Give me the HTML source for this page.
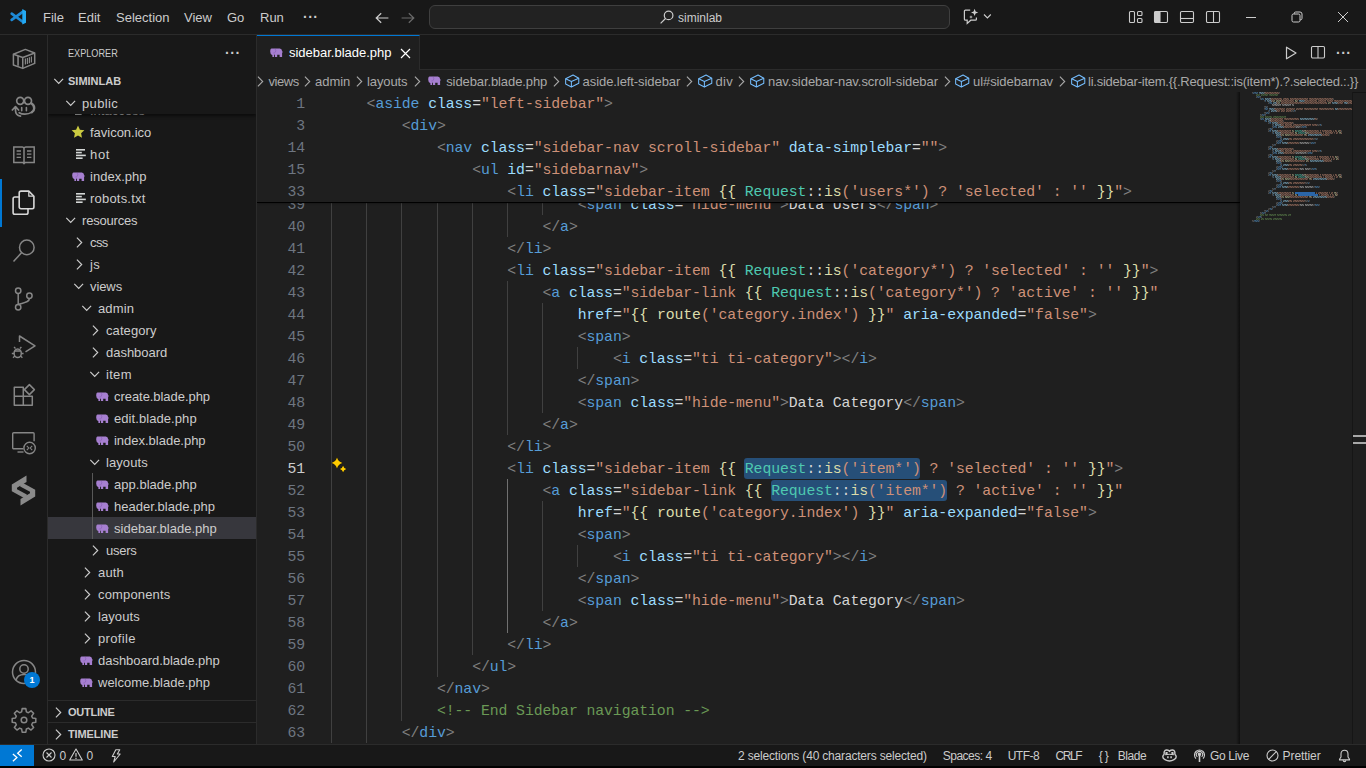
<!DOCTYPE html>
<html>
<head>
<meta charset="utf-8">
<title>sidebar.blade.php - siminlab - Visual Studio Code</title>
<style>
*{box-sizing:border-box;margin:0;padding:0}
html,body{width:1366px;height:768px;overflow:hidden;background:#181818}
body{font-family:"Liberation Sans",sans-serif;font-size:13px;color:#cccccc;position:relative}
.abs{position:absolute}
svg{display:block;position:absolute}
/* ---------- title bar ---------- */
#titlebar{position:absolute;left:0;top:0;width:1366px;height:35px;background:#181818;border-bottom:1px solid #2b2b2b}
.menu{position:absolute;top:0;height:34px;line-height:36px;font-size:13px;color:#cccccc;white-space:nowrap}
#cmd{position:absolute;left:429px;top:5px;width:521px;height:24px;border:1px solid #3f3f3f;border-radius:6px;background:#222222}
/* ---------- activity bar ---------- */
#activity{position:absolute;left:0;top:35px;width:48px;height:709px;background:#181818;border-right:1px solid #2b2b2b}
/* ---------- sidebar ---------- */
#sidebar{position:absolute;left:48px;top:35px;width:209px;height:709px;background:#181818;border-right:1px solid #2b2b2b;overflow:hidden}
.row{position:absolute;left:0;width:208px;height:22px;line-height:22px;font-size:13px;color:#cccccc;white-space:nowrap}
.t{position:absolute;height:22px;line-height:22px;font-size:13px;color:#cccccc;white-space:nowrap;transform:translateY(0.6px)}
/* ---------- editor ---------- */
#editor{position:absolute;left:257px;top:35px;width:1109px;height:709px;background:#1f1f1f;overflow:hidden}
#tabs{position:absolute;left:0;top:0;width:1109px;height:35px;background:#181818;border-bottom:1px solid #2b2b2b}
#tab{position:absolute;left:0;top:0;width:163px;height:35px;background:#1f1f1f;border-top:1px solid #0078d4;border-right:1px solid #2b2b2b}
#crumbs{position:absolute;left:0;top:35px;width:1109px;height:22px;background:#1f1f1f;line-height:24px;font-size:13px;color:#a9a9a9;white-space:nowrap}
#codearea{position:absolute;left:0;top:57px;width:1109px;height:652px;overflow:hidden}
#sticky{position:absolute;left:0;top:0;width:983px;height:110px;background:#1f1f1f;border-bottom:0;box-shadow:0 1px 0 #000,0 2px 2px -1px rgba(0,0,0,.6)}
.code{font-family:"Liberation Mono",monospace;font-size:14.8px;letter-spacing:-0.0843px;white-space:pre;color:#d4d4d4}
.ln{position:absolute;left:0;height:22px;width:1109px;line-height:22px}
.ln .n{position:absolute;left:0;top:1px;width:48px;text-align:right;color:#6e7681}
.ln .na{color:#cccccc}
.ln .c{position:absolute;top:1px}
.gd{position:absolute;top:0;width:1px;height:22px;background:#404040}
.ga{background:#707070}
.selbox{position:absolute;top:1px;height:21px;background:#264f78;border-radius:3px}
#minimap{position:absolute;left:983px;top:0;width:112px;height:652px;background:#1f1f1f}
#minimap:before{content:"";position:absolute;left:-4px;top:0;width:4px;height:652px;background:linear-gradient(to right,rgba(0,0,0,0),rgba(0,0,0,.55))}
/* ---------- status bar ---------- */
#status{position:absolute;left:0;top:744px;width:1366px;height:22px;background:#181818;border-top:1px solid #2b2b2b;font-size:12px;color:#cccccc}
#blackstrip{position:absolute;left:0;top:766px;width:1366px;height:2px;background:#000}
.tx{position:absolute;white-space:pre;color:#cccccc}
.si{position:absolute;top:0;height:22px;line-height:22px;white-space:nowrap}
/* token colours */
.g{color:#808080}.b{color:#569cd6}.a{color:#9cdcfe}.s{color:#ce9178}.y{color:#dcdcaa}.k{color:#4ec9b0}.w{color:#d4d4d4}.cm{color:#6a9955}
</style>
</head>
<body>
<div id="titlebar">
<svg style="left:9px;top:8px" width="18" height="18" viewBox="0 0 18 18"><path d="M14 3.600 2.700 11.900M14 14 2.700 5.700" stroke="#1e8ad6" stroke-width="2.700" stroke-linecap="round" fill="none"/><path d="M13.300 1.100 17 2.900v11.800l-3.700 1.800z" fill="#23a9f2"/></svg>
<span class="menu" style="left:43px">File</span>
<span class="menu" style="left:78px">Edit</span>
<span class="menu" style="left:116px">Selection</span>
<span class="menu" style="left:184px">View</span>
<span class="menu" style="left:227px">Go</span>
<span class="menu" style="left:260px">Run</span>
<span class="menu" style="left:303px;letter-spacing:0.5px;font-size:14px;font-weight:bold;line-height:35px">···</span>
<svg style="left:374px;top:10px" width="16" height="16" viewBox="0 0 16 16" fill="none" stroke="#cccccc" stroke-width="1.2"><path d="M7.2 3.2 2.2 8l5 4.8M2.4 8h12"/></svg>
<svg style="left:400px;top:10px" width="16" height="16" viewBox="0 0 16 16" fill="none" stroke="#6a6a6a" stroke-width="1.2"><path d="M8.8 3.2 13.8 8l-5 4.8M13.6 8h-12"/></svg>
<div id="cmd"></div>
<svg style="left:659px;top:9px" width="16" height="16" viewBox="0 0 16 16" fill="none" stroke="#cccccc" stroke-width="1.2"><circle cx="9.6" cy="6.4" r="4.3"/><path d="M6.5 9.5 1.6 14.4"/></svg>
<span class="menu" style="left:678px;font-size:12px">siminlab</span>
<svg style="left:963px;top:8px" width="17" height="17" viewBox="0 0 17 17" fill="none" stroke="#cccccc" stroke-width="1.2"><path d="M7.2 2.2H2.4a1 1 0 0 0-1 1v8a1 1 0 0 0 1 1h1.8v3.2l3.6-3.2h4.6a1 1 0 0 0 1-1V9.6"/><path d="M11.6 0.8l1 2.6 2.6 1-2.6 1-1 2.6-1-2.6-2.6-1 2.6-1z" fill="#cccccc" stroke="none"/><path d="M8 7.2l.5 1.3 1.3.5-1.3.5L8 10.800l-.5-1.300-1.300-.5 1.300-.5z" fill="#cccccc" stroke="none"/></svg>
<svg style="left:983px;top:13px" width="9" height="7" viewBox="0 0 9 7" fill="none" stroke="#cccccc" stroke-width="1.1"><path d="M1 1.500 4.400 5 7.800 1.500"/></svg>
<!-- layout icons -->
<svg style="left:1128px;top:9px" width="16" height="16" viewBox="0 0 16 16" fill="none" stroke="#cccccc" stroke-width="1.1"><rect x="1.5" y="2.500" width="5" height="11" rx="1"/><rect x="9.500" y="2.500" width="4.500" height="4" rx="1"/><rect x="9.500" y="9.500" width="4.500" height="4" rx="1"/></svg>
<svg style="left:1153px;top:9px" width="16" height="16" viewBox="0 0 16 16" fill="none" stroke="#cccccc" stroke-width="1.1"><rect x="1.500" y="2.500" width="13" height="11" rx="1.200"/><path d="M2 3h5v10H2z" fill="#cccccc"/></svg>
<svg style="left:1179px;top:9px" width="16" height="16" viewBox="0 0 16 16" fill="none" stroke="#cccccc" stroke-width="1.1"><rect x="1.500" y="2.500" width="13" height="11" rx="1.200"/><path d="M1.500 9.500h13"/></svg>
<svg style="left:1205px;top:9px" width="16" height="16" viewBox="0 0 16 16" fill="none" stroke="#cccccc" stroke-width="1.1"><rect x="1.500" y="2.500" width="13" height="11" rx="1.200"/><path d="M8.500 2.500v11"/></svg>
<!-- window controls -->
<div class="abs" style="left:1246px;top:17px;width:10px;height:1px;background:#cccccc"></div>
<svg style="left:1291px;top:11px" width="12" height="12" viewBox="0 0 12 12" fill="none" stroke="#cccccc" stroke-width="1"><rect x="1" y="3" width="8" height="8" rx="1.500"/><path d="M3.200 3V2.500a1.500 1.500 0 0 1 1.500-1.500H9a2 2 0 0 1 2 2v4.300a1.500 1.500 0 0 1-1.500 1.500H9"/></svg>
<svg style="left:1337px;top:11px" width="12" height="12" viewBox="0 0 12 12" fill="none" stroke="#cccccc" stroke-width="1"><path d="M1 1l10 10M11 1 1 11"/></svg>

</div>
<div id="activity">
<div class="abs" style="left:0;top:144px;width:2px;height:48px;background:#0078d4"></div>
<!-- container (y center 59 abs => 24 rel) -->
<svg style="left:12px;top:12px" width="24" height="24" viewBox="0 0 24 24" fill="none" stroke="#868686" stroke-width="1.500" stroke-linejoin="round"><path d="M1.400 7.300 13.350 2.400l9.350 3.600v10.400L10.750 21.400 1.400 18z"/><path d="M1.400 7.300 10.750 10.450l11.950-4.450M10.750 10.450V21.400"/><path d="M6.060 9v9.800" stroke-width="1.600"/><path d="M13.400 11.600v6M15.400 10.900v6M17.400 10.200v6M19.400 9.500v6" stroke-width="1.200"/></svg>
<!-- copilot w/ arrow (center 107 abs => 72 rel) -->
<svg style="left:11px;top:60px" width="26" height="24" viewBox="0 0 26 24" fill="none" stroke="#868686" stroke-width="1.700" stroke-linecap="round" stroke-linejoin="round"><circle cx="9.200" cy="5.800" r="3.500"/><circle cx="17" cy="5.800" r="3.500"/><path d="M12.300 7.600c.5-.5 1.100-.500 1.600 0"/><path d="M10.700 12.500v3.200M15.400 12.500v3.200" stroke-width="1.600"/><path d="M20.300 8.300c1.700 1 2.900 2.800 2.900 4.900 0 1.800-.9 3.100-2.400 4" stroke-width="2.400"/><path d="M21 17.100c-2 1.300-4.500 2-7.200 2-2.100 0-4-.400-5.600-1.400"/><path d="M4.500 11.800v3.500c0 3 2 5.400 5 5.800M1.300 15 4.500 11.600 7.600 15"/></svg>
<!-- book (center 155 abs => 120 rel) -->
<svg style="left:12px;top:108px" width="24" height="24" viewBox="0 0 24 24" fill="none" stroke="#868686" stroke-width="1.500"><path d="M1.800 4h8.400a1.800 1.800 0 0 1 1.800 1.800v13.600H1.800zM22.200 4h-8.400A1.800 1.800 0 0 0 12 5.800v13.600h10.200z"/><path d="M11 19.600l1 1.200 1-1.200" stroke-width="1.200"/><path d="M4.600 8h4.400M4.600 11.200h4.400M4.600 14.300h4.400M15 8h4.400M15 11.200h4.400M15 14.300h4.400" stroke-width="1.300"/></svg>
<!-- files (active) (center 203 abs => 168 rel) -->
<svg style="left:11px;top:155px" width="26" height="26" viewBox="0 0 26 26" fill="none" stroke="#d7d7d7" stroke-width="1.600" stroke-linejoin="round"><path d="M10 1.100h7.800l5.100 5.100V17a1.700 1.700 0 0 1-1.700 1.700H10a1.800 1.800 0 0 1-1.800-1.800V2.900A1.800 1.800 0 0 1 10 1.100z"/><path d="M17.800 1.400v4.800h4.900" stroke-width="1.200"/><path d="M8.200 7H3.900a1.800 1.800 0 0 0-1.800 1.800v13.700a1.800 1.800 0 0 0 1.800 1.800h11.300a1.800 1.800 0 0 0 1.800-1.800v-3.800"/></svg>
<!-- search (center 251 abs => 216 rel) -->
<svg style="left:12px;top:204px" width="24" height="24" viewBox="0 0 24 24" fill="none" stroke="#868686" stroke-width="1.500"><circle cx="14.800" cy="8.400" r="7.300"/><path d="M9.700 13.600 1.500 22.500"/></svg>
<!-- git (center 299 abs => 264 rel) -->
<svg style="left:12px;top:252px" width="24" height="24" viewBox="0 0 24 24" fill="none" stroke="#868686" stroke-width="1.500"><circle cx="6.200" cy="3.800" r="2.700"/><circle cx="6.200" cy="20.200" r="2.700"/><circle cx="17.400" cy="8.800" r="2.700"/><path d="M6.200 6.500v11M17.400 11.500c0 3.500-5 4-11.200 6"/></svg>
<!-- debug (center 347 abs => 312 rel) -->
<svg style="left:10px;top:298px" width="28" height="28" viewBox="0 0 28 28" fill="none" stroke="#868686" stroke-width="1.500" stroke-linejoin="round"><path d="M9.500 9V3l15.500 9.800-9.500 6"/><ellipse cx="7.700" cy="20.200" rx="3.600" ry="4.300"/><path d="M4.600 18h6.200M5.500 15.500l-1.500-1.500M9.900 15.500l1.500-1.500M4.100 20.500H1.800M11.300 20.500h2.300M4.800 23l-1.800 1.800M10.600 23l1.800 1.800" stroke-width="1.300"/></svg>
<!-- extensions (center 395 abs => 360 rel) -->
<svg style="left:12px;top:348px" width="24" height="24" viewBox="0 0 24 24" fill="none" stroke="#868686" stroke-width="1.500" stroke-linejoin="round"><path d="M2.300 4.300h9v9h-9zM2.300 13.300h9v9h-9zM11.300 13.300h9v9h-9z"/><path d="M17.400 1.600l5 5-5 5-5-5z"/></svg>
<!-- remote explorer (center 443 abs => 408 rel) -->
<svg style="left:12px;top:396px" width="26" height="24" viewBox="0 0 26 24" fill="none" stroke="#868686" stroke-width="1.400"><path d="M11.500 17.800H1.700a1 1 0 0 1-1-1V2.800a1 1 0 0 1 1-1h19.400a1 1 0 0 1 1 1v7.500"/><path d="M5.500 21h6" /><circle cx="17.600" cy="17" r="5.700" fill="#181818"/><path d="M14.800 14.800l2 2.200-2 2.200M20.200 14.800l-2 2.200 2 2.200" stroke-width="1.100"/></svg>
<!-- S logo (center 491 abs => 456 rel) -->
<svg style="left:11px;top:440px" width="25" height="31" viewBox="0 0 25 31" fill="#8a8a8a"><path d="M15.500 0.500 0.800 9.500v6.800l15 8.300v-5.200L6 14.200v-1.500l9.500-5.700z"/><path d="M9.500 30.500l14.700-9v-6.800l-15-8.300v5.200l9.800 5.200v1.500l-9.500 5.700z"/></svg>
<!-- account (center 672 abs => 637 rel) -->
<svg style="left:11px;top:624px" width="26" height="26" viewBox="0 0 26 26" fill="none" stroke="#868686" stroke-width="1.500"><circle cx="13" cy="13" r="11.500"/><circle cx="13" cy="10" r="4.200"/><path d="M5 21.200c1-4 4-5.700 8-5.700s7 1.700 8 5.700"/></svg>
<div class="abs" style="left:24px;top:637px;width:16px;height:16px;border-radius:8px;background:#0078d4;color:#fff;font-size:9px;font-weight:bold;line-height:16px;text-align:center">1</div>
<!-- gear (center 720 abs => 685 rel) -->
<svg style="left:11px;top:672px" width="26" height="26" viewBox="0 0 24 24" fill="none" stroke="#868686" stroke-width="1.400" stroke-linejoin="round"><path d="M10.300 1.500h3.400l.5 3 1.800.8 2.500-1.800 2.400 2.400-1.800 2.500.8 1.800 3 .5v3.400l-3 .5-.8 1.800 1.800 2.500-2.400 2.400-2.500-1.800-1.800.8-.5 3h-3.400l-.5-3-1.800-.8-2.500 1.800-2.400-2.400 1.800-2.500-.8-1.800-3-.5v-3.400l3-.5.8-1.800-1.800-2.500 2.400-2.400 2.500 1.800 1.800-.8z"/><circle cx="12" cy="12" r="2.600"/></svg>

</div>
<div id="sidebar">
<div class="abs" style="left:0;top:482px;width:208px;height:22px;background:#37373d"></div>
<span class="t" style="left:42px;top:64px;color:#cccccc">.htaccess</span><svg style="left:27px;top:70px" width="11" height="11" viewBox="0 0 11 11" fill="#d4d7d6"><rect x="0" y="0" width="9" height="1.600"/><rect x="0" y="2.800" width="5.800" height="1.600"/><rect x="0" y="5.600" width="9.800" height="1.600"/><rect x="0" y="8.400" width="6.600" height="1.600"/></svg>
<div class="row" style="top:86px"></div><svg style="left:23px;top:90px" width="14" height="14" viewBox="0 0 14 14"><path d="M7 .600l1.900 4.100 4.500.500-3.300 3.100.900 4.500L7 10.500l-4 2.300.900-4.500L.6 5.200l4.500-.500z" fill="#cbcb41"/></svg><span class="t" style="left:42px;top:86px;letter-spacing:-0.02px">favicon.ico</span>
<div class="row" style="top:108px"></div><svg style="left:28px;top:114px" width="11" height="11" viewBox="0 0 11 11" fill="#d4d7d6"><rect x="0" y="0" width="9" height="1.600"/><rect x="0" y="2.800" width="5.800" height="1.600"/><rect x="0" y="5.600" width="9.800" height="1.600"/><rect x="0" y="8.400" width="6.600" height="1.600"/></svg><span class="t" style="left:42px;top:108px;letter-spacing:0.707px">hot</span>
<div class="row" style="top:130px"></div><svg style="left:24px;top:136.5px" width="13" height="10" viewBox="0 0 13 10"><path d="M1.600 .500h8.200q2.100 0 2.400 2.700l.800 1-.900.400v4.400H9.600V6.800H7.200V9H4.900V6.500q-.800.100-.900.900V9H2.400V7.200Q.2 6.500.2 3.700.2.500 1.600.500z" fill="#a67fd0"/><path d="M5 .800q1.500 1.700.3 3.500-.800.900-2 .7" fill="none" stroke="#8a5fb8" stroke-width=".700"/></svg><span class="t" style="left:42px;top:130px;letter-spacing:0.023px">index.php</span>
<div class="row" style="top:152px"></div><svg style="left:28px;top:158px" width="11" height="11" viewBox="0 0 11 11" fill="#d4d7d6"><rect x="0" y="0" width="9" height="1.600"/><rect x="0" y="2.800" width="5.800" height="1.600"/><rect x="0" y="5.600" width="9.800" height="1.600"/><rect x="0" y="8.400" width="6.600" height="1.600"/></svg><span class="t" style="left:42px;top:152px;letter-spacing:0.203px">robots.txt</span>
<div class="row" style="top:174px"></div><svg style="left:17px;top:182px" width="11" height="7" viewBox="0 0 11 7" fill="none" stroke="#cccccc" stroke-width="1.200"><path d="M1.300 .900 5.700 5.300 10.100 .900"/></svg><span class="t" style="left:34px;top:174px;letter-spacing:-0.186px">resources</span>
<div class="row" style="top:196px"></div><svg style="left:28px;top:202px" width="7" height="11" viewBox="0 0 7 11" fill="none" stroke="#cccccc" stroke-width="1.150"><path d="M.900 .700 5.700 5.500 .900 10.300"/></svg><span class="t" style="left:42px;top:196px;letter-spacing:-0.567px">css</span>
<div class="row" style="top:218px"></div><svg style="left:28px;top:224px" width="7" height="11" viewBox="0 0 7 11" fill="none" stroke="#cccccc" stroke-width="1.150"><path d="M.900 .700 5.700 5.500 .900 10.300"/></svg><span class="t" style="left:42px;top:218px;letter-spacing:0.255px">js</span>
<div class="row" style="top:240px"></div><svg style="left:25px;top:248px" width="11" height="7" viewBox="0 0 11 7" fill="none" stroke="#cccccc" stroke-width="1.200"><path d="M1.300 .900 5.700 5.300 10.100 .900"/></svg><span class="t" style="left:42px;top:240px;letter-spacing:-0.083px">views</span>
<div class="row" style="top:262px"></div><svg style="left:33px;top:270px" width="11" height="7" viewBox="0 0 11 7" fill="none" stroke="#cccccc" stroke-width="1.200"><path d="M1.300 .900 5.700 5.300 10.100 .900"/></svg><span class="t" style="left:50px;top:262px;letter-spacing:0.136px">admin</span>
<div class="row" style="top:284px"></div><svg style="left:44px;top:290px" width="7" height="11" viewBox="0 0 7 11" fill="none" stroke="#cccccc" stroke-width="1.150"><path d="M.900 .700 5.700 5.500 .900 10.300"/></svg><span class="t" style="left:58px;top:284px;letter-spacing:0.078px">category</span>
<div class="row" style="top:306px"></div><svg style="left:44px;top:312px" width="7" height="11" viewBox="0 0 7 11" fill="none" stroke="#cccccc" stroke-width="1.150"><path d="M.900 .700 5.700 5.500 .900 10.300"/></svg><span class="t" style="left:58px;top:306px;letter-spacing:-0.017px">dashboard</span>
<div class="row" style="top:328px"></div><svg style="left:41px;top:336px" width="11" height="7" viewBox="0 0 11 7" fill="none" stroke="#cccccc" stroke-width="1.200"><path d="M1.300 .900 5.700 5.300 10.100 .900"/></svg><span class="t" style="left:58px;top:328px;letter-spacing:0.309px">item</span>
<div class="row" style="top:350px"></div><svg style="left:48px;top:356.5px" width="13" height="10" viewBox="0 0 13 10"><path d="M1.600 .500h8.200q2.100 0 2.400 2.700l.800 1-.900.400v4.400H9.600V6.800H7.200V9H4.900V6.500q-.800.100-.900.900V9H2.400V7.200Q.2 6.500.2 3.700.2.500 1.600.500z" fill="#a67fd0"/><path d="M5 .800q1.500 1.700.3 3.500-.800.900-2 .7" fill="none" stroke="#8a5fb8" stroke-width=".700"/></svg><span class="t" style="left:66px;top:350px;letter-spacing:-0.054px">create.blade.php</span>
<div class="row" style="top:372px"></div><svg style="left:48px;top:378.5px" width="13" height="10" viewBox="0 0 13 10"><path d="M1.600 .500h8.200q2.100 0 2.400 2.700l.800 1-.900.400v4.400H9.600V6.800H7.200V9H4.900V6.500q-.800.100-.900.900V9H2.400V7.200Q.2 6.500.2 3.700.2.500 1.600.500z" fill="#a67fd0"/><path d="M5 .800q1.500 1.700.3 3.500-.800.900-2 .7" fill="none" stroke="#8a5fb8" stroke-width=".700"/></svg><span class="t" style="left:66px;top:372px;letter-spacing:0.072px">edit.blade.php</span>
<div class="row" style="top:394px"></div><svg style="left:48px;top:400.5px" width="13" height="10" viewBox="0 0 13 10"><path d="M1.600 .500h8.200q2.100 0 2.400 2.700l.800 1-.900.400v4.400H9.600V6.800H7.200V9H4.900V6.500q-.800.100-.900.900V9H2.400V7.200Q.2 6.500.2 3.700.2.500 1.600.500z" fill="#a67fd0"/><path d="M5 .800q1.500 1.700.3 3.500-.800.900-2 .7" fill="none" stroke="#8a5fb8" stroke-width=".700"/></svg><span class="t" style="left:66px;top:394px;letter-spacing:-0.014px">index.blade.php</span>
<div class="row" style="top:416px"></div><svg style="left:41px;top:424px" width="11" height="7" viewBox="0 0 11 7" fill="none" stroke="#cccccc" stroke-width="1.200"><path d="M1.300 .900 5.700 5.300 10.100 .900"/></svg><span class="t" style="left:58px;top:416px;letter-spacing:0.085px">layouts</span>
<div class="row" style="top:438px"></div><svg style="left:48px;top:444.5px" width="13" height="10" viewBox="0 0 13 10"><path d="M1.600 .500h8.200q2.100 0 2.400 2.700l.800 1-.900.400v4.400H9.600V6.800H7.200V9H4.900V6.500q-.800.100-.900.900V9H2.400V7.200Q.2 6.500.2 3.700.2.500 1.600.500z" fill="#a67fd0"/><path d="M5 .800q1.500 1.700.3 3.500-.800.900-2 .7" fill="none" stroke="#8a5fb8" stroke-width=".700"/></svg><span class="t" style="left:66px;top:438px;letter-spacing:0.029px">app.blade.php</span>
<div class="row" style="top:460px"></div><svg style="left:48px;top:466.5px" width="13" height="10" viewBox="0 0 13 10"><path d="M1.600 .500h8.200q2.100 0 2.400 2.700l.800 1-.900.400v4.400H9.600V6.800H7.200V9H4.900V6.500q-.800.100-.900.900V9H2.400V7.200Q.2 6.500.2 3.700.2.500 1.600.500z" fill="#a67fd0"/><path d="M5 .800q1.500 1.700.3 3.500-.800.900-2 .7" fill="none" stroke="#8a5fb8" stroke-width=".700"/></svg><span class="t" style="left:66px;top:460px;letter-spacing:0.026px">header.blade.php</span>
<div class="row" style="top:482px"></div><svg style="left:48px;top:488.5px" width="13" height="10" viewBox="0 0 13 10"><path d="M1.600 .500h8.200q2.100 0 2.400 2.700l.800 1-.900.400v4.400H9.600V6.800H7.200V9H4.900V6.500q-.800.100-.900.900V9H2.400V7.200Q.2 6.500.2 3.700.2.500 1.600.500z" fill="#a67fd0"/><path d="M5 .800q1.500 1.700.3 3.500-.800.900-2 .7" fill="none" stroke="#8a5fb8" stroke-width=".700"/></svg><span class="t" style="left:66px;top:482px;letter-spacing:0.008px">sidebar.blade.php</span>
<div class="row" style="top:504px"></div><svg style="left:44px;top:510px" width="7" height="11" viewBox="0 0 7 11" fill="none" stroke="#cccccc" stroke-width="1.150"><path d="M.900 .700 5.700 5.500 .900 10.300"/></svg><span class="t" style="left:58px;top:504px;letter-spacing:-0.259px">users</span>
<div class="row" style="top:526px"></div><svg style="left:36px;top:532px" width="7" height="11" viewBox="0 0 7 11" fill="none" stroke="#cccccc" stroke-width="1.150"><path d="M.900 .700 5.700 5.500 .900 10.300"/></svg><span class="t" style="left:50px;top:526px;letter-spacing:0.172px">auth</span>
<div class="row" style="top:548px"></div><svg style="left:36px;top:554px" width="7" height="11" viewBox="0 0 7 11" fill="none" stroke="#cccccc" stroke-width="1.150"><path d="M.900 .700 5.700 5.500 .900 10.300"/></svg><span class="t" style="left:50px;top:548px;letter-spacing:0.157px">components</span>
<div class="row" style="top:570px"></div><svg style="left:36px;top:576px" width="7" height="11" viewBox="0 0 7 11" fill="none" stroke="#cccccc" stroke-width="1.150"><path d="M.900 .700 5.700 5.500 .900 10.300"/></svg><span class="t" style="left:50px;top:570px;letter-spacing:0.085px">layouts</span>
<div class="row" style="top:592px"></div><svg style="left:36px;top:598px" width="7" height="11" viewBox="0 0 7 11" fill="none" stroke="#cccccc" stroke-width="1.150"><path d="M.900 .700 5.700 5.500 .900 10.300"/></svg><span class="t" style="left:50px;top:592px;letter-spacing:0.34px">profile</span>
<div class="row" style="top:614px"></div><svg style="left:32px;top:620.5px" width="13" height="10" viewBox="0 0 13 10"><path d="M1.600 .500h8.200q2.100 0 2.400 2.700l.800 1-.900.400v4.400H9.600V6.800H7.200V9H4.900V6.500q-.800.100-.900.900V9H2.400V7.200Q.2 6.500.2 3.700.2.500 1.600.500z" fill="#a67fd0"/><path d="M5 .800q1.500 1.700.3 3.500-.800.900-2 .7" fill="none" stroke="#8a5fb8" stroke-width=".700"/></svg><span class="t" style="left:50px;top:614px;letter-spacing:-0.025px">dashboard.blade.php</span>
<div class="row" style="top:636px"></div><svg style="left:32px;top:642.5px" width="13" height="10" viewBox="0 0 13 10"><path d="M1.600 .500h8.200q2.100 0 2.400 2.700l.800 1-.900.400v4.400H9.600V6.800H7.200V9H4.900V6.500q-.800.100-.900.900V9H2.400V7.200Q.2 6.500.2 3.700.2.500 1.600.500z" fill="#a67fd0"/><path d="M5 .800q1.500 1.700.3 3.500-.800.900-2 .7" fill="none" stroke="#8a5fb8" stroke-width=".700"/></svg><span class="t" style="left:50px;top:636px;letter-spacing:-0.002px">welcome.blade.php</span>
<div class="abs" style="left:44px;top:438px;width:1px;height:66px;background:#585858"></div>
<div class="abs" style="left:0;top:0;width:208px;height:79px;background:#181818;box-shadow:0 2px 3px rgba(0,0,0,.55)"></div>
<span class="t" style="left:20px;top:7px;font-size:11px;color:#cccccc;line-height:22px;transform-origin:0 50%;transform:translateY(-0.5px) scaleX(0.83)">EXPLORER</span>
<span class="t" style="left:177px;top:6px;font-size:14px;font-weight:bold;letter-spacing:0.6px;line-height:22px;color:#cccccc">···</span>
<svg style="left:5px;top:43px" width="11" height="7" viewBox="0 0 11 7" fill="none" stroke="#cccccc" stroke-width="1.200"><path d="M1.300 .900 5.700 5.300 10.100 .900"/></svg><span class="t" style="left:20px;top:35px;font-size:11px;font-weight:bold;line-height:22px;transform:translateY(-0.4px)">SIMINLAB</span>
<svg style="left:17px;top:65px" width="11" height="7" viewBox="0 0 11 7" fill="none" stroke="#cccccc" stroke-width="1.200"><path d="M1.300 .900 5.700 5.300 10.100 .900"/></svg><span class="t" style="left:34px;top:57px;letter-spacing:0.339px">public</span>
<div class="abs" style="left:0;top:665px;width:208px;height:1px;background:#2b2b2b"></div>
<svg style="left:7px;top:672px" width="7" height="11" viewBox="0 0 7 11" fill="none" stroke="#cccccc" stroke-width="1.150"><path d="M.900 .700 5.700 5.500 .900 10.300"/></svg><span class="t" style="left:20px;top:666px;font-size:11px;font-weight:bold;line-height:22px;transform:translateY(-0.4px);letter-spacing:-0.25px">OUTLINE</span>
<div class="abs" style="left:0;top:687px;width:208px;height:1px;background:#2b2b2b"></div>
<svg style="left:7px;top:694px" width="7" height="11" viewBox="0 0 7 11" fill="none" stroke="#cccccc" stroke-width="1.150"><path d="M.900 .700 5.700 5.500 .900 10.300"/></svg><span class="t" style="left:20px;top:688px;font-size:11px;font-weight:bold;line-height:22px;transform:translateY(-0.4px);letter-spacing:-0.15px">TIMELINE</span>
</div>
<div id="editor">
  <div id="tabs"><div id="tab"></div>
<svg style="left:13px;top:13px" width="13" height="10" viewBox="0 0 13 10"><path d="M1.600 .500h8.200q2.100 0 2.400 2.700l.800 1-.900.400v4.400H9.600V6.800H7.200V9H4.900V6.500q-.800.100-.900.900V9H2.400V7.200Q.2 6.500.2 3.700.2.500 1.600.500z" fill="#a67fd0"/><path d="M5 .800q1.500 1.700.3 3.500-.800.900-2 .7" fill="none" stroke="#8a5fb8" stroke-width=".700"/></svg>
<span class="tx" style="left:32px;top:0px;height:36px;line-height:36px;font-size:13px;letter-spacing:-0.015px;color:#ffffff">sidebar.blade.php</span>
<svg style="left:143px;top:13px" width="11" height="11" viewBox="0 0 11 11" fill="none" stroke="#ffffff" stroke-width="1.200"><path d="M1 1l9 9M10 1 1 10"/></svg>
<svg style="left:1027px;top:11px" width="14" height="14" viewBox="0 0 14 14" fill="none" stroke="#cccccc" stroke-width="1.200" stroke-linejoin="round"><path d="M2.500 1.200 12 7 2.500 12.800z"/></svg>
<svg style="left:1053px;top:10px" width="16" height="15" viewBox="0 0 16 15" fill="none" stroke="#cccccc" stroke-width="1.100"><rect x="1.500" y="1.500" width="13" height="11.500" rx="1.200"/><path d="M8 1.500v11.500"/></svg>
<span class="tx" style="left:1079px;top:1px;height:35px;line-height:35px;font-size:14px;font-weight:bold;letter-spacing:0.5px">···</span>
  </div>
  <div id="crumbs">
<svg style="left:0px;top:6px" width="7" height="11" viewBox="0 0 7 11" fill="none" stroke="#a9a9a9" stroke-width="1.100"><path d="M.900 .700 5.700 5.500 .900 10.300"/></svg>
<span class="tx" style="left:11.5px;top:1px;height:22px;line-height:22px;font-size:13px;letter-spacing:-0.443px;color:#a9a9a9">views</span>
<svg style="left:47px;top:6px" width="7" height="11" viewBox="0 0 7 11" fill="none" stroke="#a9a9a9" stroke-width="1.100"><path d="M.900 .700 5.700 5.500 .900 10.300"/></svg>
<span class="tx" style="left:58px;top:1px;height:22px;line-height:22px;font-size:13px;letter-spacing:-0.024px;color:#a9a9a9">admin</span>
<svg style="left:99px;top:6px" width="7" height="11" viewBox="0 0 7 11" fill="none" stroke="#a9a9a9" stroke-width="1.100"><path d="M.900 .700 5.700 5.500 .900 10.300"/></svg>
<span class="tx" style="left:110px;top:1px;height:22px;line-height:22px;font-size:13px;letter-spacing:-0.1px;color:#a9a9a9">layouts</span>
<svg style="left:157px;top:6px" width="7" height="11" viewBox="0 0 7 11" fill="none" stroke="#a9a9a9" stroke-width="1.100"><path d="M.900 .700 5.700 5.500 .900 10.300"/></svg>
<svg style="left:171px;top:6px" width="13" height="10" viewBox="0 0 13 10"><path d="M1.600 .500h8.200q2.100 0 2.400 2.700l.800 1-.900.400v4.400H9.600V6.800H7.200V9H4.900V6.500q-.800.100-.900.900V9H2.400V7.200Q.2 6.500.2 3.700.2.500 1.600.500z" fill="#a67fd0"/><path d="M5 .800q1.500 1.700.3 3.500-.800.900-2 .7" fill="none" stroke="#8a5fb8" stroke-width=".700"/></svg>
<span class="tx" style="left:189.2px;top:1px;height:22px;line-height:22px;font-size:13px;letter-spacing:-0.097px;color:#a9a9a9">sidebar.blade.php</span>
<svg style="left:296px;top:6px" width="7" height="11" viewBox="0 0 7 11" fill="none" stroke="#a9a9a9" stroke-width="1.100"><path d="M.900 .700 5.700 5.500 .900 10.300"/></svg>
<svg style="left:307.5px;top:4px" width="15" height="14" viewBox="0 0 16 14" preserveAspectRatio="none" fill="none" stroke="#75beff" stroke-width="1.100" stroke-linejoin="round"><path d="M8.600 1.050 14.700 4.300V9.200L6.800 13.100.7 10.050V4.800z"/><path d="M.7 4.800 6.800 7.600 14.700 4.300M6.800 7.600V13.100"/></svg>
<span class="tx" style="left:325.6px;top:1px;height:22px;line-height:22px;font-size:13px;letter-spacing:-0.078px;color:#a9a9a9">aside.left-sidebar</span>
<svg style="left:429px;top:6px" width="7" height="11" viewBox="0 0 7 11" fill="none" stroke="#a9a9a9" stroke-width="1.100"><path d="M.900 .700 5.700 5.500 .900 10.300"/></svg>
<svg style="left:440.5px;top:4px" width="15" height="14" viewBox="0 0 16 14" preserveAspectRatio="none" fill="none" stroke="#75beff" stroke-width="1.100" stroke-linejoin="round"><path d="M8.600 1.050 14.700 4.300V9.200L6.800 13.100.7 10.050V4.800z"/><path d="M.7 4.800 6.800 7.600 14.700 4.300M6.800 7.600V13.100"/></svg>
<span class="tx" style="left:458.5px;top:1px;height:22px;line-height:22px;font-size:13px;letter-spacing:0.292px;color:#a9a9a9">div</span>
<svg style="left:480.5px;top:6px" width="7" height="11" viewBox="0 0 7 11" fill="none" stroke="#a9a9a9" stroke-width="1.100"><path d="M.900 .700 5.700 5.500 .900 10.300"/></svg>
<svg style="left:492.5px;top:4px" width="15" height="14" viewBox="0 0 16 14" preserveAspectRatio="none" fill="none" stroke="#75beff" stroke-width="1.100" stroke-linejoin="round"><path d="M8.600 1.050 14.700 4.300V9.200L6.800 13.100.7 10.050V4.800z"/><path d="M.7 4.800 6.800 7.600 14.700 4.300M6.800 7.600V13.100"/></svg>
<span class="tx" style="left:511px;top:1px;height:22px;line-height:22px;font-size:13px;letter-spacing:-0.049px;color:#a9a9a9">nav.sidebar-nav.scroll-sidebar</span>
<svg style="left:686.5px;top:6px" width="7" height="11" viewBox="0 0 7 11" fill="none" stroke="#a9a9a9" stroke-width="1.100"><path d="M.900 .700 5.700 5.500 .900 10.300"/></svg>
<svg style="left:697.5px;top:4px" width="15" height="14" viewBox="0 0 16 14" preserveAspectRatio="none" fill="none" stroke="#75beff" stroke-width="1.100" stroke-linejoin="round"><path d="M8.600 1.050 14.700 4.300V9.200L6.800 13.100.7 10.050V4.800z"/><path d="M.7 4.800 6.800 7.600 14.700 4.300M6.800 7.600V13.100"/></svg>
<span class="tx" style="left:716px;top:1px;height:22px;line-height:22px;font-size:13px;letter-spacing:-0.073px;color:#a9a9a9">ul#sidebarnav</span>
<svg style="left:801.5px;top:6px" width="7" height="11" viewBox="0 0 7 11" fill="none" stroke="#a9a9a9" stroke-width="1.100"><path d="M.900 .700 5.700 5.500 .900 10.300"/></svg>
<svg style="left:813.5px;top:4px" width="15" height="14" viewBox="0 0 16 14" preserveAspectRatio="none" fill="none" stroke="#75beff" stroke-width="1.100" stroke-linejoin="round"><path d="M8.600 1.050 14.700 4.300V9.200L6.800 13.100.7 10.050V4.800z"/><path d="M.7 4.800 6.800 7.600 14.700 4.300M6.800 7.600V13.100"/></svg>
<span class="tx" style="left:831px;top:1px;height:22px;line-height:22px;font-size:13px;letter-spacing:-0.236px;color:#a9a9a9">li.sidebar-item.{{.Request::is(item*).?.selected.:.}}</span>
  </div>
  <div id="codearea">
<div class="ln code" style="top:101px"><i class="gd" style="left:74px"></i><i class="gd" style="left:109px"></i><i class="gd" style="left:144px"></i><i class="gd" style="left:180px"></i><i class="gd" style="left:215px"></i><i class="gd" style="left:250px"></i><i class="gd" style="left:285px"></i><span class="n">39</span><span class="c" style="left:320.72px"><span class="g">&lt;</span><span class="b">span</span> <span class="a">class</span><span class="w">=</span><span class="s">"hide-menu"</span><span class="g">&gt;</span><span class="w">Data Users</span><span class="g">&lt;/</span><span class="b">span</span><span class="g">&gt;</span></span></div>
<div class="ln code" style="top:123px"><i class="gd" style="left:74px"></i><i class="gd" style="left:109px"></i><i class="gd" style="left:144px"></i><i class="gd" style="left:180px"></i><i class="gd" style="left:215px"></i><i class="gd" style="left:250px"></i><span class="n">40</span><span class="c" style="left:285.53px"><span class="g">&lt;/</span><span class="b">a</span><span class="g">&gt;</span></span></div>
<div class="ln code" style="top:145px"><i class="gd" style="left:74px"></i><i class="gd" style="left:109px"></i><i class="gd" style="left:144px"></i><i class="gd" style="left:180px"></i><i class="gd" style="left:215px"></i><span class="n">41</span><span class="c" style="left:250.34px"><span class="g">&lt;/</span><span class="b">li</span><span class="g">&gt;</span></span></div>
<div class="ln code" style="top:167px"><i class="gd" style="left:74px"></i><i class="gd" style="left:109px"></i><i class="gd" style="left:144px"></i><i class="gd" style="left:180px"></i><i class="gd" style="left:215px"></i><span class="n">42</span><span class="c" style="left:250.34px"><span class="g">&lt;</span><span class="b">li</span> <span class="a">class</span><span class="w">=</span><span class="s">"sidebar-item </span><span class="y">{{</span><span class="s"> </span><span class="k">Request</span><span class="w">::</span><span class="y">is</span><span class="s">(</span><span class="s">'category*'</span><span class="s">)</span><span class="s"> ? </span><span class="s">'selected'</span><span class="s"> : </span><span class="s">''</span><span class="s"> </span><span class="y">}}</span><span class="s">"</span><span class="g">&gt;</span></span></div>
<div class="ln code" style="top:189px"><i class="gd" style="left:74px"></i><i class="gd" style="left:109px"></i><i class="gd" style="left:144px"></i><i class="gd" style="left:180px"></i><i class="gd" style="left:215px"></i><i class="gd" style="left:250px"></i><span class="n">43</span><span class="c" style="left:285.53px"><span class="g">&lt;</span><span class="b">a</span> <span class="a">class</span><span class="w">=</span><span class="s">"sidebar-link </span><span class="y">{{</span><span class="s"> </span><span class="k">Request</span><span class="w">::</span><span class="y">is</span><span class="s">(</span><span class="s">'category*'</span><span class="s">)</span><span class="s"> ? </span><span class="s">'active'</span><span class="s"> : </span><span class="s">''</span><span class="s"> </span><span class="y">}}</span><span class="s">"</span></span></div>
<div class="ln code" style="top:211px"><i class="gd" style="left:74px"></i><i class="gd" style="left:109px"></i><i class="gd" style="left:144px"></i><i class="gd" style="left:180px"></i><i class="gd" style="left:215px"></i><i class="gd" style="left:250px"></i><i class="gd" style="left:285px"></i><span class="n">44</span><span class="c" style="left:320.72px"><span class="a">href</span><span class="w">=</span><span class="s">"</span><span class="y">{{</span><span class="s"> </span><span class="y">route</span><span class="s">(</span><span class="s">'category.index'</span><span class="s">)</span><span class="s"> </span><span class="y">}}</span><span class="s">"</span> <span class="a">aria-expanded</span><span class="w">=</span><span class="s">"false"</span><span class="g">&gt;</span></span></div>
<div class="ln code" style="top:233px"><i class="gd" style="left:74px"></i><i class="gd" style="left:109px"></i><i class="gd" style="left:144px"></i><i class="gd" style="left:180px"></i><i class="gd" style="left:215px"></i><i class="gd" style="left:250px"></i><i class="gd" style="left:285px"></i><span class="n">45</span><span class="c" style="left:320.72px"><span class="g">&lt;</span><span class="b">span</span><span class="g">&gt;</span></span></div>
<div class="ln code" style="top:255px"><i class="gd" style="left:74px"></i><i class="gd" style="left:109px"></i><i class="gd" style="left:144px"></i><i class="gd" style="left:180px"></i><i class="gd" style="left:215px"></i><i class="gd" style="left:250px"></i><i class="gd" style="left:285px"></i><i class="gd" style="left:320px"></i><span class="n">46</span><span class="c" style="left:355.90px"><span class="g">&lt;</span><span class="b">i</span> <span class="a">class</span><span class="w">=</span><span class="s">"ti ti-category"</span><span class="g">&gt;</span><span class="g">&lt;/</span><span class="b">i</span><span class="g">&gt;</span></span></div>
<div class="ln code" style="top:277px"><i class="gd" style="left:74px"></i><i class="gd" style="left:109px"></i><i class="gd" style="left:144px"></i><i class="gd" style="left:180px"></i><i class="gd" style="left:215px"></i><i class="gd" style="left:250px"></i><i class="gd" style="left:285px"></i><span class="n">47</span><span class="c" style="left:320.72px"><span class="g">&lt;/</span><span class="b">span</span><span class="g">&gt;</span></span></div>
<div class="ln code" style="top:299px"><i class="gd" style="left:74px"></i><i class="gd" style="left:109px"></i><i class="gd" style="left:144px"></i><i class="gd" style="left:180px"></i><i class="gd" style="left:215px"></i><i class="gd" style="left:250px"></i><i class="gd" style="left:285px"></i><span class="n">48</span><span class="c" style="left:320.72px"><span class="g">&lt;</span><span class="b">span</span> <span class="a">class</span><span class="w">=</span><span class="s">"hide-menu"</span><span class="g">&gt;</span><span class="w">Data Category</span><span class="g">&lt;/</span><span class="b">span</span><span class="g">&gt;</span></span></div>
<div class="ln code" style="top:321px"><i class="gd" style="left:74px"></i><i class="gd" style="left:109px"></i><i class="gd" style="left:144px"></i><i class="gd" style="left:180px"></i><i class="gd" style="left:215px"></i><i class="gd" style="left:250px"></i><span class="n">49</span><span class="c" style="left:285.53px"><span class="g">&lt;/</span><span class="b">a</span><span class="g">&gt;</span></span></div>
<div class="ln code" style="top:343px"><i class="gd" style="left:74px"></i><i class="gd" style="left:109px"></i><i class="gd" style="left:144px"></i><i class="gd" style="left:180px"></i><i class="gd" style="left:215px"></i><span class="n">50</span><span class="c" style="left:250.34px"><span class="g">&lt;/</span><span class="b">li</span><span class="g">&gt;</span></span></div>
<div class="ln code" style="top:365px"><i class="gd" style="left:74px"></i><i class="gd" style="left:109px"></i><i class="gd" style="left:144px"></i><i class="gd" style="left:180px"></i><i class="gd" style="left:215px"></i><i class="selbox" style="left:487px;width:176px"></i><span class="n na">51</span><span class="c" style="left:250.34px"><span class="g">&lt;</span><span class="b">li</span> <span class="a">class</span><span class="w">=</span><span class="s">"sidebar-item </span><span class="y">{{</span><span class="s"> </span><span class="k">Request</span><span class="w">::</span><span class="y">is</span><span class="s">(</span><span class="s">'item*'</span><span class="s">)</span><span class="s"> ? </span><span class="s">'selected'</span><span class="s"> : </span><span class="s">''</span><span class="s"> </span><span class="y">}}</span><span class="s">"</span><span class="g">&gt;</span></span></div>
<div class="ln code" style="top:387px"><i class="gd" style="left:74px"></i><i class="gd" style="left:109px"></i><i class="gd" style="left:144px"></i><i class="gd" style="left:180px"></i><i class="gd" style="left:215px"></i><i class="gd ga" style="left:250px"></i><i class="selbox" style="left:514px;width:176px"></i><span class="n">52</span><span class="c" style="left:285.53px"><span class="g">&lt;</span><span class="b">a</span> <span class="a">class</span><span class="w">=</span><span class="s">"sidebar-link </span><span class="y">{{</span><span class="s"> </span><span class="k">Request</span><span class="w">::</span><span class="y">is</span><span class="s">(</span><span class="s">'item*'</span><span class="s">)</span><span class="s"> ? </span><span class="s">'active'</span><span class="s"> : </span><span class="s">''</span><span class="s"> </span><span class="y">}}</span><span class="s">"</span></span></div>
<div class="ln code" style="top:409px"><i class="gd" style="left:74px"></i><i class="gd" style="left:109px"></i><i class="gd" style="left:144px"></i><i class="gd" style="left:180px"></i><i class="gd" style="left:215px"></i><i class="gd ga" style="left:250px"></i><i class="gd" style="left:285px"></i><span class="n">53</span><span class="c" style="left:320.72px"><span class="a">href</span><span class="w">=</span><span class="s">"</span><span class="y">{{</span><span class="s"> </span><span class="y">route</span><span class="s">(</span><span class="s">'category.index'</span><span class="s">)</span><span class="s"> </span><span class="y">}}</span><span class="s">"</span> <span class="a">aria-expanded</span><span class="w">=</span><span class="s">"false"</span><span class="g">&gt;</span></span></div>
<div class="ln code" style="top:431px"><i class="gd" style="left:74px"></i><i class="gd" style="left:109px"></i><i class="gd" style="left:144px"></i><i class="gd" style="left:180px"></i><i class="gd" style="left:215px"></i><i class="gd ga" style="left:250px"></i><i class="gd" style="left:285px"></i><span class="n">54</span><span class="c" style="left:320.72px"><span class="g">&lt;</span><span class="b">span</span><span class="g">&gt;</span></span></div>
<div class="ln code" style="top:453px"><i class="gd" style="left:74px"></i><i class="gd" style="left:109px"></i><i class="gd" style="left:144px"></i><i class="gd" style="left:180px"></i><i class="gd" style="left:215px"></i><i class="gd ga" style="left:250px"></i><i class="gd" style="left:285px"></i><i class="gd" style="left:320px"></i><span class="n">55</span><span class="c" style="left:355.90px"><span class="g">&lt;</span><span class="b">i</span> <span class="a">class</span><span class="w">=</span><span class="s">"ti ti-category"</span><span class="g">&gt;</span><span class="g">&lt;/</span><span class="b">i</span><span class="g">&gt;</span></span></div>
<div class="ln code" style="top:475px"><i class="gd" style="left:74px"></i><i class="gd" style="left:109px"></i><i class="gd" style="left:144px"></i><i class="gd" style="left:180px"></i><i class="gd" style="left:215px"></i><i class="gd ga" style="left:250px"></i><i class="gd" style="left:285px"></i><span class="n">56</span><span class="c" style="left:320.72px"><span class="g">&lt;/</span><span class="b">span</span><span class="g">&gt;</span></span></div>
<div class="ln code" style="top:497px"><i class="gd" style="left:74px"></i><i class="gd" style="left:109px"></i><i class="gd" style="left:144px"></i><i class="gd" style="left:180px"></i><i class="gd" style="left:215px"></i><i class="gd ga" style="left:250px"></i><i class="gd" style="left:285px"></i><span class="n">57</span><span class="c" style="left:320.72px"><span class="g">&lt;</span><span class="b">span</span> <span class="a">class</span><span class="w">=</span><span class="s">"hide-menu"</span><span class="g">&gt;</span><span class="w">Data Category</span><span class="g">&lt;/</span><span class="b">span</span><span class="g">&gt;</span></span></div>
<div class="ln code" style="top:519px"><i class="gd" style="left:74px"></i><i class="gd" style="left:109px"></i><i class="gd" style="left:144px"></i><i class="gd" style="left:180px"></i><i class="gd" style="left:215px"></i><i class="gd ga" style="left:250px"></i><span class="n">58</span><span class="c" style="left:285.53px"><span class="g">&lt;/</span><span class="b">a</span><span class="g">&gt;</span></span></div>
<div class="ln code" style="top:541px"><i class="gd" style="left:74px"></i><i class="gd" style="left:109px"></i><i class="gd" style="left:144px"></i><i class="gd" style="left:180px"></i><i class="gd" style="left:215px"></i><span class="n">59</span><span class="c" style="left:250.34px"><span class="g">&lt;/</span><span class="b">li</span><span class="g">&gt;</span></span></div>
<div class="ln code" style="top:563px"><i class="gd" style="left:74px"></i><i class="gd" style="left:109px"></i><i class="gd" style="left:144px"></i><i class="gd" style="left:180px"></i><span class="n">60</span><span class="c" style="left:215.15px"><span class="g">&lt;/</span><span class="b">ul</span><span class="g">&gt;</span></span></div>
<div class="ln code" style="top:585px"><i class="gd" style="left:74px"></i><i class="gd" style="left:109px"></i><i class="gd" style="left:144px"></i><span class="n">61</span><span class="c" style="left:179.96px"><span class="g">&lt;/</span><span class="b">nav</span><span class="g">&gt;</span></span></div>
<div class="ln code" style="top:607px"><i class="gd" style="left:74px"></i><i class="gd" style="left:109px"></i><i class="gd" style="left:144px"></i><span class="n">62</span><span class="c" style="left:179.96px"><span class="cm">&lt;!-- End Sidebar navigation --&gt;</span></span></div>
<div class="ln code" style="top:629px"><i class="gd" style="left:74px"></i><i class="gd" style="left:109px"></i><span class="n">63</span><span class="c" style="left:144.78px"><span class="g">&lt;/</span><span class="b">div</span><span class="g">&gt;</span></span></div>
<div id="sticky">
<div class="ln code" style="top:0px"><span class="n">1</span><span class="c" style="left:109.59px"><span class="g">&lt;</span><span class="b">aside</span> <span class="a">class</span><span class="w">=</span><span class="s">"left-sidebar"</span><span class="g">&gt;</span></span></div>
<div class="ln code" style="top:22px"><span class="n">3</span><span class="c" style="left:144.78px"><span class="g">&lt;</span><span class="b">div</span><span class="g">&gt;</span></span></div>
<div class="ln code" style="top:44px"><span class="n">14</span><span class="c" style="left:179.96px"><span class="g">&lt;</span><span class="b">nav</span> <span class="a">class</span><span class="w">=</span><span class="s">"sidebar-nav scroll-sidebar"</span> <span class="a">data-simplebar</span><span class="w">=</span><span class="s">""</span><span class="g">&gt;</span></span></div>
<div class="ln code" style="top:66px"><span class="n">15</span><span class="c" style="left:215.15px"><span class="g">&lt;</span><span class="b">ul</span> <span class="a">id</span><span class="w">=</span><span class="s">"sidebarnav"</span><span class="g">&gt;</span></span></div>
<div class="ln code" style="top:88px"><span class="n">33</span><span class="c" style="left:250.34px"><span class="g">&lt;</span><span class="b">li</span> <span class="a">class</span><span class="w">=</span><span class="s">"sidebar-item </span><span class="y">{{</span><span class="s"> </span><span class="k">Request</span><span class="w">::</span><span class="y">is</span><span class="s">(</span><span class="s">'users*'</span><span class="s">)</span><span class="s"> ? </span><span class="s">'selected'</span><span class="s"> : </span><span class="s">''</span><span class="s"> </span><span class="y">}}</span><span class="s">"</span><span class="g">&gt;</span></span></div>
</div>
<div id="minimap"><svg style="left:0;top:0" width="112" height="140" viewBox="0 0 112 140" shape-rendering="crispEdges"><defs><pattern id="dp" width="5" height="2" patternUnits="userSpaceOnUse"><rect x="0" y="0" width="1" height="1" fill="rgb(255,255,255)"/><rect x="1" y="0" width="1" height="1" fill="rgb(140,140,140)"/><rect x="2" y="0" width="1" height="1" fill="rgb(229,229,229)"/><rect x="3" y="0" width="1" height="1" fill="rgb(127,127,127)"/><rect x="4" y="0" width="1" height="1" fill="rgb(204,204,204)"/><rect x="0" y="1" width="1" height="1" fill="rgb(153,153,153)"/><rect x="1" y="1" width="1" height="1" fill="rgb(242,242,242)"/><rect x="2" y="1" width="1" height="1" fill="rgb(127,127,127)"/><rect x="3" y="1" width="1" height="1" fill="rgb(216,216,216)"/><rect x="4" y="1" width="1" height="1" fill="rgb(114,114,114)"/></pattern><mask id="dm"><rect x="0" y="0" width="112" height="140" fill="url(#dp)"/></mask></defs><g opacity="0.52" mask="url(#dm)"><rect x="12" y="0" width="1" height="2" fill="#808080"/><rect x="13" y="0" width="5" height="2" fill="#569cd6"/><rect x="19" y="0" width="5" height="2" fill="#9cdcfe"/><rect x="24" y="0" width="1" height="2" fill="#d4d4d4"/><rect x="25" y="0" width="14" height="2" fill="#ce9178"/><rect x="39" y="0" width="1" height="2" fill="#808080"/><rect x="16" y="2" width="4" height="2" fill="#6a9955"/><rect x="21" y="2" width="7" height="2" fill="#6a9955"/><rect x="29" y="2" width="9" height="2" fill="#6a9955"/><rect x="16" y="4" width="1" height="2" fill="#808080"/><rect x="17" y="4" width="3" height="2" fill="#569cd6"/><rect x="20" y="4" width="1" height="2" fill="#808080"/><rect x="20" y="6" width="1" height="2" fill="#808080"/><rect x="21" y="6" width="3" height="2" fill="#569cd6"/><rect x="25" y="6" width="5" height="2" fill="#9cdcfe"/><rect x="30" y="6" width="1" height="2" fill="#d4d4d4"/><rect x="31" y="6" width="11" height="2" fill="#ce9178"/><rect x="43" y="6" width="6" height="2" fill="#ce9178"/><rect x="50" y="6" width="18" height="2" fill="#ce9178"/><rect x="69" y="6" width="24" height="2" fill="#ce9178"/><rect x="93" y="6" width="1" height="2" fill="#808080"/><rect x="24" y="8" width="1" height="2" fill="#808080"/><rect x="25" y="8" width="1" height="2" fill="#569cd6"/><rect x="27" y="8" width="4" height="2" fill="#9cdcfe"/><rect x="31" y="8" width="1" height="2" fill="#d4d4d4"/><rect x="32" y="8" width="1" height="2" fill="#ce9178"/><rect x="33" y="8" width="2" height="2" fill="#dcdcaa"/><rect x="36" y="8" width="5" height="2" fill="#dcdcaa"/><rect x="41" y="8" width="1" height="2" fill="#ce9178"/><rect x="42" y="8" width="11" height="2" fill="#ce9178"/><rect x="53" y="8" width="1" height="2" fill="#ce9178"/><rect x="55" y="8" width="2" height="2" fill="#dcdcaa"/><rect x="57" y="8" width="1" height="2" fill="#ce9178"/><rect x="59" y="8" width="5" height="2" fill="#9cdcfe"/><rect x="64" y="8" width="1" height="2" fill="#d4d4d4"/><rect x="65" y="8" width="12" height="2" fill="#ce9178"/><rect x="78" y="8" width="8" height="2" fill="#ce9178"/><rect x="87" y="8" width="6" height="2" fill="#ce9178"/><rect x="94" y="8" width="18" height="2" fill="#ce9178"/><rect x="28" y="10" width="1" height="2" fill="#808080"/><rect x="29" y="10" width="3" height="2" fill="#569cd6"/><rect x="33" y="10" width="3" height="2" fill="#9cdcfe"/><rect x="36" y="10" width="1" height="2" fill="#d4d4d4"/><rect x="37" y="10" width="1" height="2" fill="#ce9178"/><rect x="38" y="10" width="2" height="2" fill="#dcdcaa"/><rect x="41" y="10" width="46" height="2" fill="#ce9178"/><rect x="88" y="10" width="2" height="2" fill="#dcdcaa"/><rect x="90" y="10" width="1" height="2" fill="#ce9178"/><rect x="92" y="10" width="5" height="2" fill="#9cdcfe"/><rect x="97" y="10" width="1" height="2" fill="#d4d4d4"/><rect x="98" y="10" width="5" height="2" fill="#ce9178"/><rect x="104" y="10" width="3" height="2" fill="#9cdcfe"/><rect x="107" y="10" width="1" height="2" fill="#d4d4d4"/><rect x="108" y="10" width="4" height="2" fill="#ce9178"/><rect x="32" y="12" width="9" height="2" fill="#d4d4d4"/><rect x="42" y="12" width="9" height="2" fill="#d4d4d4"/><rect x="52" y="12" width="2" height="2" fill="#d4d4d4"/><rect x="24" y="14" width="2" height="2" fill="#808080"/><rect x="26" y="14" width="1" height="2" fill="#569cd6"/><rect x="27" y="14" width="1" height="2" fill="#808080"/><rect x="24" y="16" width="1" height="2" fill="#808080"/><rect x="25" y="16" width="3" height="2" fill="#569cd6"/><rect x="29" y="16" width="5" height="2" fill="#9cdcfe"/><rect x="34" y="16" width="1" height="2" fill="#d4d4d4"/><rect x="35" y="16" width="10" height="2" fill="#ce9178"/><rect x="46" y="16" width="9" height="2" fill="#ce9178"/><rect x="56" y="16" width="7" height="2" fill="#ce9178"/><rect x="64" y="16" width="14" height="2" fill="#ce9178"/><rect x="79" y="16" width="15" height="2" fill="#ce9178"/><rect x="95" y="16" width="2" height="2" fill="#9cdcfe"/><rect x="97" y="16" width="1" height="2" fill="#d4d4d4"/><rect x="98" y="16" width="14" height="2" fill="#ce9178"/><rect x="28" y="18" width="1" height="2" fill="#808080"/><rect x="29" y="18" width="1" height="2" fill="#569cd6"/><rect x="31" y="18" width="5" height="2" fill="#9cdcfe"/><rect x="36" y="18" width="1" height="2" fill="#d4d4d4"/><rect x="37" y="18" width="3" height="2" fill="#ce9178"/><rect x="41" y="18" width="4" height="2" fill="#ce9178"/><rect x="46" y="18" width="5" height="2" fill="#ce9178"/><rect x="51" y="18" width="1" height="2" fill="#808080"/><rect x="52" y="18" width="2" height="2" fill="#808080"/><rect x="54" y="18" width="1" height="2" fill="#569cd6"/><rect x="55" y="18" width="1" height="2" fill="#808080"/><rect x="24" y="20" width="2" height="2" fill="#808080"/><rect x="26" y="20" width="3" height="2" fill="#569cd6"/><rect x="29" y="20" width="1" height="2" fill="#808080"/><rect x="20" y="22" width="2" height="2" fill="#808080"/><rect x="22" y="22" width="3" height="2" fill="#569cd6"/><rect x="25" y="22" width="1" height="2" fill="#808080"/><rect x="20" y="24" width="4" height="2" fill="#6a9955"/><rect x="25" y="24" width="7" height="2" fill="#6a9955"/><rect x="33" y="24" width="13" height="2" fill="#6a9955"/><rect x="20" y="26" width="1" height="2" fill="#808080"/><rect x="21" y="26" width="3" height="2" fill="#569cd6"/><rect x="25" y="26" width="5" height="2" fill="#9cdcfe"/><rect x="30" y="26" width="1" height="2" fill="#d4d4d4"/><rect x="31" y="26" width="12" height="2" fill="#ce9178"/><rect x="44" y="26" width="15" height="2" fill="#ce9178"/><rect x="60" y="26" width="14" height="2" fill="#9cdcfe"/><rect x="74" y="26" width="1" height="2" fill="#d4d4d4"/><rect x="75" y="26" width="2" height="2" fill="#ce9178"/><rect x="77" y="26" width="1" height="2" fill="#808080"/><rect x="24" y="28" width="1" height="2" fill="#808080"/><rect x="25" y="28" width="2" height="2" fill="#569cd6"/><rect x="28" y="28" width="2" height="2" fill="#9cdcfe"/><rect x="30" y="28" width="1" height="2" fill="#d4d4d4"/><rect x="31" y="28" width="12" height="2" fill="#ce9178"/><rect x="43" y="28" width="1" height="2" fill="#808080"/><rect x="28" y="30" width="1" height="2" fill="#808080"/><rect x="29" y="30" width="2" height="2" fill="#569cd6"/><rect x="32" y="30" width="5" height="2" fill="#9cdcfe"/><rect x="37" y="30" width="1" height="2" fill="#d4d4d4"/><rect x="38" y="30" width="15" height="2" fill="#ce9178"/><rect x="53" y="30" width="1" height="2" fill="#808080"/><rect x="32" y="32" width="1" height="2" fill="#808080"/><rect x="33" y="32" width="1" height="2" fill="#569cd6"/><rect x="35" y="32" width="5" height="2" fill="#9cdcfe"/><rect x="40" y="32" width="1" height="2" fill="#d4d4d4"/><rect x="41" y="32" width="3" height="2" fill="#ce9178"/><rect x="45" y="32" width="7" height="2" fill="#ce9178"/><rect x="53" y="32" width="18" height="2" fill="#ce9178"/><rect x="72" y="32" width="5" height="2" fill="#ce9178"/><rect x="77" y="32" width="1" height="2" fill="#808080"/><rect x="78" y="32" width="2" height="2" fill="#808080"/><rect x="80" y="32" width="1" height="2" fill="#569cd6"/><rect x="81" y="32" width="1" height="2" fill="#808080"/><rect x="32" y="34" width="1" height="2" fill="#808080"/><rect x="33" y="34" width="4" height="2" fill="#569cd6"/><rect x="38" y="34" width="5" height="2" fill="#9cdcfe"/><rect x="43" y="34" width="1" height="2" fill="#d4d4d4"/><rect x="44" y="34" width="11" height="2" fill="#ce9178"/><rect x="55" y="34" width="1" height="2" fill="#808080"/><rect x="56" y="34" width="4" height="2" fill="#d4d4d4"/><rect x="60" y="34" width="2" height="2" fill="#808080"/><rect x="62" y="34" width="4" height="2" fill="#569cd6"/><rect x="66" y="34" width="1" height="2" fill="#808080"/><rect x="28" y="36" width="2" height="2" fill="#808080"/><rect x="30" y="36" width="2" height="2" fill="#569cd6"/><rect x="32" y="36" width="1" height="2" fill="#808080"/><rect x="28" y="38" width="1" height="2" fill="#808080"/><rect x="29" y="38" width="2" height="2" fill="#569cd6"/><rect x="32" y="38" width="5" height="2" fill="#9cdcfe"/><rect x="37" y="38" width="1" height="2" fill="#d4d4d4"/><rect x="38" y="38" width="13" height="2" fill="#ce9178"/><rect x="52" y="38" width="2" height="2" fill="#dcdcaa"/><rect x="55" y="38" width="7" height="2" fill="#4ec9b0"/><rect x="62" y="38" width="2" height="2" fill="#d4d4d4"/><rect x="64" y="38" width="2" height="2" fill="#dcdcaa"/><rect x="66" y="38" width="1" height="2" fill="#ce9178"/><rect x="67" y="38" width="11" height="2" fill="#ce9178"/><rect x="78" y="38" width="1" height="2" fill="#ce9178"/><rect x="80" y="38" width="1" height="2" fill="#ce9178"/><rect x="82" y="38" width="10" height="2" fill="#ce9178"/><rect x="93" y="38" width="1" height="2" fill="#ce9178"/><rect x="95" y="38" width="2" height="2" fill="#ce9178"/><rect x="98" y="38" width="2" height="2" fill="#dcdcaa"/><rect x="100" y="38" width="1" height="2" fill="#ce9178"/><rect x="101" y="38" width="1" height="2" fill="#808080"/><rect x="32" y="40" width="1" height="2" fill="#808080"/><rect x="33" y="40" width="1" height="2" fill="#569cd6"/><rect x="35" y="40" width="5" height="2" fill="#9cdcfe"/><rect x="40" y="40" width="1" height="2" fill="#d4d4d4"/><rect x="41" y="40" width="13" height="2" fill="#ce9178"/><rect x="55" y="40" width="2" height="2" fill="#dcdcaa"/><rect x="58" y="40" width="7" height="2" fill="#4ec9b0"/><rect x="65" y="40" width="2" height="2" fill="#d4d4d4"/><rect x="67" y="40" width="2" height="2" fill="#dcdcaa"/><rect x="69" y="40" width="1" height="2" fill="#ce9178"/><rect x="70" y="40" width="11" height="2" fill="#ce9178"/><rect x="81" y="40" width="1" height="2" fill="#ce9178"/><rect x="83" y="40" width="1" height="2" fill="#ce9178"/><rect x="85" y="40" width="8" height="2" fill="#ce9178"/><rect x="94" y="40" width="1" height="2" fill="#ce9178"/><rect x="96" y="40" width="2" height="2" fill="#ce9178"/><rect x="99" y="40" width="2" height="2" fill="#dcdcaa"/><rect x="101" y="40" width="1" height="2" fill="#ce9178"/><rect x="36" y="42" width="4" height="2" fill="#9cdcfe"/><rect x="40" y="42" width="1" height="2" fill="#d4d4d4"/><rect x="41" y="42" width="1" height="2" fill="#ce9178"/><rect x="42" y="42" width="2" height="2" fill="#dcdcaa"/><rect x="45" y="42" width="5" height="2" fill="#dcdcaa"/><rect x="50" y="42" width="1" height="2" fill="#ce9178"/><rect x="51" y="42" width="11" height="2" fill="#ce9178"/><rect x="62" y="42" width="1" height="2" fill="#ce9178"/><rect x="64" y="42" width="2" height="2" fill="#dcdcaa"/><rect x="66" y="42" width="1" height="2" fill="#ce9178"/><rect x="68" y="42" width="13" height="2" fill="#9cdcfe"/><rect x="81" y="42" width="1" height="2" fill="#d4d4d4"/><rect x="82" y="42" width="7" height="2" fill="#ce9178"/><rect x="89" y="42" width="1" height="2" fill="#808080"/><rect x="36" y="44" width="1" height="2" fill="#808080"/><rect x="37" y="44" width="4" height="2" fill="#569cd6"/><rect x="41" y="44" width="1" height="2" fill="#808080"/><rect x="40" y="46" width="1" height="2" fill="#808080"/><rect x="41" y="46" width="1" height="2" fill="#569cd6"/><rect x="43" y="46" width="5" height="2" fill="#9cdcfe"/><rect x="48" y="46" width="1" height="2" fill="#d4d4d4"/><rect x="49" y="46" width="3" height="2" fill="#ce9178"/><rect x="53" y="46" width="20" height="2" fill="#ce9178"/><rect x="73" y="46" width="1" height="2" fill="#808080"/><rect x="74" y="46" width="2" height="2" fill="#808080"/><rect x="76" y="46" width="1" height="2" fill="#569cd6"/><rect x="77" y="46" width="1" height="2" fill="#808080"/><rect x="36" y="48" width="2" height="2" fill="#808080"/><rect x="38" y="48" width="4" height="2" fill="#569cd6"/><rect x="42" y="48" width="1" height="2" fill="#808080"/><rect x="36" y="50" width="1" height="2" fill="#808080"/><rect x="37" y="50" width="4" height="2" fill="#569cd6"/><rect x="42" y="50" width="5" height="2" fill="#9cdcfe"/><rect x="47" y="50" width="1" height="2" fill="#d4d4d4"/><rect x="48" y="50" width="11" height="2" fill="#ce9178"/><rect x="59" y="50" width="1" height="2" fill="#808080"/><rect x="60" y="50" width="9" height="2" fill="#d4d4d4"/><rect x="69" y="50" width="2" height="2" fill="#808080"/><rect x="71" y="50" width="4" height="2" fill="#569cd6"/><rect x="75" y="50" width="1" height="2" fill="#808080"/><rect x="32" y="52" width="2" height="2" fill="#808080"/><rect x="34" y="52" width="1" height="2" fill="#569cd6"/><rect x="35" y="52" width="1" height="2" fill="#808080"/><rect x="28" y="54" width="2" height="2" fill="#808080"/><rect x="30" y="54" width="2" height="2" fill="#569cd6"/><rect x="32" y="54" width="1" height="2" fill="#808080"/><rect x="28" y="56" width="1" height="2" fill="#808080"/><rect x="29" y="56" width="2" height="2" fill="#569cd6"/><rect x="32" y="56" width="5" height="2" fill="#9cdcfe"/><rect x="37" y="56" width="1" height="2" fill="#d4d4d4"/><rect x="38" y="56" width="15" height="2" fill="#ce9178"/><rect x="53" y="56" width="1" height="2" fill="#808080"/><rect x="32" y="58" width="1" height="2" fill="#808080"/><rect x="33" y="58" width="1" height="2" fill="#569cd6"/><rect x="35" y="58" width="5" height="2" fill="#9cdcfe"/><rect x="40" y="58" width="1" height="2" fill="#d4d4d4"/><rect x="41" y="58" width="3" height="2" fill="#ce9178"/><rect x="45" y="58" width="7" height="2" fill="#ce9178"/><rect x="53" y="58" width="18" height="2" fill="#ce9178"/><rect x="72" y="58" width="5" height="2" fill="#ce9178"/><rect x="77" y="58" width="1" height="2" fill="#808080"/><rect x="78" y="58" width="2" height="2" fill="#808080"/><rect x="80" y="58" width="1" height="2" fill="#569cd6"/><rect x="81" y="58" width="1" height="2" fill="#808080"/><rect x="32" y="60" width="1" height="2" fill="#808080"/><rect x="33" y="60" width="4" height="2" fill="#569cd6"/><rect x="38" y="60" width="5" height="2" fill="#9cdcfe"/><rect x="43" y="60" width="1" height="2" fill="#d4d4d4"/><rect x="44" y="60" width="11" height="2" fill="#ce9178"/><rect x="55" y="60" width="1" height="2" fill="#808080"/><rect x="56" y="60" width="10" height="2" fill="#d4d4d4"/><rect x="66" y="60" width="2" height="2" fill="#808080"/><rect x="68" y="60" width="4" height="2" fill="#569cd6"/><rect x="72" y="60" width="1" height="2" fill="#808080"/><rect x="28" y="62" width="2" height="2" fill="#808080"/><rect x="30" y="62" width="2" height="2" fill="#569cd6"/><rect x="32" y="62" width="1" height="2" fill="#808080"/><rect x="28" y="64" width="1" height="2" fill="#808080"/><rect x="29" y="64" width="2" height="2" fill="#569cd6"/><rect x="32" y="64" width="5" height="2" fill="#9cdcfe"/><rect x="37" y="64" width="1" height="2" fill="#d4d4d4"/><rect x="38" y="64" width="13" height="2" fill="#ce9178"/><rect x="52" y="64" width="2" height="2" fill="#dcdcaa"/><rect x="55" y="64" width="7" height="2" fill="#4ec9b0"/><rect x="62" y="64" width="2" height="2" fill="#d4d4d4"/><rect x="64" y="64" width="2" height="2" fill="#dcdcaa"/><rect x="66" y="64" width="1" height="2" fill="#ce9178"/><rect x="67" y="64" width="8" height="2" fill="#ce9178"/><rect x="75" y="64" width="1" height="2" fill="#ce9178"/><rect x="77" y="64" width="1" height="2" fill="#ce9178"/><rect x="79" y="64" width="10" height="2" fill="#ce9178"/><rect x="90" y="64" width="1" height="2" fill="#ce9178"/><rect x="92" y="64" width="2" height="2" fill="#ce9178"/><rect x="95" y="64" width="2" height="2" fill="#dcdcaa"/><rect x="97" y="64" width="1" height="2" fill="#ce9178"/><rect x="98" y="64" width="1" height="2" fill="#808080"/><rect x="32" y="66" width="1" height="2" fill="#808080"/><rect x="33" y="66" width="1" height="2" fill="#569cd6"/><rect x="35" y="66" width="5" height="2" fill="#9cdcfe"/><rect x="40" y="66" width="1" height="2" fill="#d4d4d4"/><rect x="41" y="66" width="13" height="2" fill="#ce9178"/><rect x="55" y="66" width="2" height="2" fill="#dcdcaa"/><rect x="58" y="66" width="7" height="2" fill="#4ec9b0"/><rect x="65" y="66" width="2" height="2" fill="#d4d4d4"/><rect x="67" y="66" width="2" height="2" fill="#dcdcaa"/><rect x="69" y="66" width="1" height="2" fill="#ce9178"/><rect x="70" y="66" width="8" height="2" fill="#ce9178"/><rect x="78" y="66" width="1" height="2" fill="#ce9178"/><rect x="80" y="66" width="1" height="2" fill="#ce9178"/><rect x="82" y="66" width="8" height="2" fill="#ce9178"/><rect x="91" y="66" width="1" height="2" fill="#ce9178"/><rect x="93" y="66" width="2" height="2" fill="#ce9178"/><rect x="96" y="66" width="2" height="2" fill="#dcdcaa"/><rect x="98" y="66" width="1" height="2" fill="#ce9178"/><rect x="36" y="68" width="4" height="2" fill="#9cdcfe"/><rect x="40" y="68" width="1" height="2" fill="#d4d4d4"/><rect x="41" y="68" width="1" height="2" fill="#ce9178"/><rect x="42" y="68" width="2" height="2" fill="#dcdcaa"/><rect x="45" y="68" width="5" height="2" fill="#dcdcaa"/><rect x="50" y="68" width="1" height="2" fill="#ce9178"/><rect x="51" y="68" width="13" height="2" fill="#ce9178"/><rect x="64" y="68" width="1" height="2" fill="#ce9178"/><rect x="66" y="68" width="2" height="2" fill="#dcdcaa"/><rect x="68" y="68" width="1" height="2" fill="#ce9178"/><rect x="70" y="68" width="13" height="2" fill="#9cdcfe"/><rect x="83" y="68" width="1" height="2" fill="#d4d4d4"/><rect x="84" y="68" width="7" height="2" fill="#ce9178"/><rect x="91" y="68" width="1" height="2" fill="#808080"/><rect x="36" y="70" width="1" height="2" fill="#808080"/><rect x="37" y="70" width="4" height="2" fill="#569cd6"/><rect x="41" y="70" width="1" height="2" fill="#808080"/><rect x="40" y="72" width="1" height="2" fill="#808080"/><rect x="41" y="72" width="1" height="2" fill="#569cd6"/><rect x="43" y="72" width="5" height="2" fill="#9cdcfe"/><rect x="48" y="72" width="1" height="2" fill="#d4d4d4"/><rect x="49" y="72" width="3" height="2" fill="#ce9178"/><rect x="53" y="72" width="9" height="2" fill="#ce9178"/><rect x="62" y="72" width="1" height="2" fill="#808080"/><rect x="63" y="72" width="2" height="2" fill="#808080"/><rect x="65" y="72" width="1" height="2" fill="#569cd6"/><rect x="66" y="72" width="1" height="2" fill="#808080"/><rect x="36" y="74" width="2" height="2" fill="#808080"/><rect x="38" y="74" width="4" height="2" fill="#569cd6"/><rect x="42" y="74" width="1" height="2" fill="#808080"/><rect x="36" y="76" width="1" height="2" fill="#808080"/><rect x="37" y="76" width="4" height="2" fill="#569cd6"/><rect x="42" y="76" width="5" height="2" fill="#9cdcfe"/><rect x="47" y="76" width="1" height="2" fill="#d4d4d4"/><rect x="48" y="76" width="11" height="2" fill="#ce9178"/><rect x="59" y="76" width="1" height="2" fill="#808080"/><rect x="60" y="76" width="4" height="2" fill="#d4d4d4"/><rect x="65" y="76" width="5" height="2" fill="#d4d4d4"/><rect x="70" y="76" width="2" height="2" fill="#808080"/><rect x="72" y="76" width="4" height="2" fill="#569cd6"/><rect x="76" y="76" width="1" height="2" fill="#808080"/><rect x="32" y="78" width="2" height="2" fill="#808080"/><rect x="34" y="78" width="1" height="2" fill="#569cd6"/><rect x="35" y="78" width="1" height="2" fill="#808080"/><rect x="28" y="80" width="2" height="2" fill="#808080"/><rect x="30" y="80" width="2" height="2" fill="#569cd6"/><rect x="32" y="80" width="1" height="2" fill="#808080"/><rect x="28" y="82" width="1" height="2" fill="#808080"/><rect x="29" y="82" width="2" height="2" fill="#569cd6"/><rect x="32" y="82" width="5" height="2" fill="#9cdcfe"/><rect x="37" y="82" width="1" height="2" fill="#d4d4d4"/><rect x="38" y="82" width="13" height="2" fill="#ce9178"/><rect x="52" y="82" width="2" height="2" fill="#dcdcaa"/><rect x="55" y="82" width="7" height="2" fill="#4ec9b0"/><rect x="62" y="82" width="2" height="2" fill="#d4d4d4"/><rect x="64" y="82" width="2" height="2" fill="#dcdcaa"/><rect x="66" y="82" width="1" height="2" fill="#ce9178"/><rect x="67" y="82" width="11" height="2" fill="#ce9178"/><rect x="78" y="82" width="1" height="2" fill="#ce9178"/><rect x="80" y="82" width="1" height="2" fill="#ce9178"/><rect x="82" y="82" width="10" height="2" fill="#ce9178"/><rect x="93" y="82" width="1" height="2" fill="#ce9178"/><rect x="95" y="82" width="2" height="2" fill="#ce9178"/><rect x="98" y="82" width="2" height="2" fill="#dcdcaa"/><rect x="100" y="82" width="1" height="2" fill="#ce9178"/><rect x="101" y="82" width="1" height="2" fill="#808080"/><rect x="32" y="84" width="1" height="2" fill="#808080"/><rect x="33" y="84" width="1" height="2" fill="#569cd6"/><rect x="35" y="84" width="5" height="2" fill="#9cdcfe"/><rect x="40" y="84" width="1" height="2" fill="#d4d4d4"/><rect x="41" y="84" width="13" height="2" fill="#ce9178"/><rect x="55" y="84" width="2" height="2" fill="#dcdcaa"/><rect x="58" y="84" width="7" height="2" fill="#4ec9b0"/><rect x="65" y="84" width="2" height="2" fill="#d4d4d4"/><rect x="67" y="84" width="2" height="2" fill="#dcdcaa"/><rect x="69" y="84" width="1" height="2" fill="#ce9178"/><rect x="70" y="84" width="11" height="2" fill="#ce9178"/><rect x="81" y="84" width="1" height="2" fill="#ce9178"/><rect x="83" y="84" width="1" height="2" fill="#ce9178"/><rect x="85" y="84" width="8" height="2" fill="#ce9178"/><rect x="94" y="84" width="1" height="2" fill="#ce9178"/><rect x="96" y="84" width="2" height="2" fill="#ce9178"/><rect x="99" y="84" width="2" height="2" fill="#dcdcaa"/><rect x="101" y="84" width="1" height="2" fill="#ce9178"/><rect x="36" y="86" width="4" height="2" fill="#9cdcfe"/><rect x="40" y="86" width="1" height="2" fill="#d4d4d4"/><rect x="41" y="86" width="1" height="2" fill="#ce9178"/><rect x="42" y="86" width="2" height="2" fill="#dcdcaa"/><rect x="45" y="86" width="5" height="2" fill="#dcdcaa"/><rect x="50" y="86" width="1" height="2" fill="#ce9178"/><rect x="51" y="86" width="16" height="2" fill="#ce9178"/><rect x="67" y="86" width="1" height="2" fill="#ce9178"/><rect x="69" y="86" width="2" height="2" fill="#dcdcaa"/><rect x="71" y="86" width="1" height="2" fill="#ce9178"/><rect x="73" y="86" width="13" height="2" fill="#9cdcfe"/><rect x="86" y="86" width="1" height="2" fill="#d4d4d4"/><rect x="87" y="86" width="7" height="2" fill="#ce9178"/><rect x="94" y="86" width="1" height="2" fill="#808080"/><rect x="36" y="88" width="1" height="2" fill="#808080"/><rect x="37" y="88" width="4" height="2" fill="#569cd6"/><rect x="41" y="88" width="1" height="2" fill="#808080"/><rect x="40" y="90" width="1" height="2" fill="#808080"/><rect x="41" y="90" width="1" height="2" fill="#569cd6"/><rect x="43" y="90" width="5" height="2" fill="#9cdcfe"/><rect x="48" y="90" width="1" height="2" fill="#d4d4d4"/><rect x="49" y="90" width="3" height="2" fill="#ce9178"/><rect x="53" y="90" width="12" height="2" fill="#ce9178"/><rect x="65" y="90" width="1" height="2" fill="#808080"/><rect x="66" y="90" width="2" height="2" fill="#808080"/><rect x="68" y="90" width="1" height="2" fill="#569cd6"/><rect x="69" y="90" width="1" height="2" fill="#808080"/><rect x="36" y="92" width="2" height="2" fill="#808080"/><rect x="38" y="92" width="4" height="2" fill="#569cd6"/><rect x="42" y="92" width="1" height="2" fill="#808080"/><rect x="36" y="94" width="1" height="2" fill="#808080"/><rect x="37" y="94" width="4" height="2" fill="#569cd6"/><rect x="42" y="94" width="5" height="2" fill="#9cdcfe"/><rect x="47" y="94" width="1" height="2" fill="#d4d4d4"/><rect x="48" y="94" width="11" height="2" fill="#ce9178"/><rect x="59" y="94" width="1" height="2" fill="#808080"/><rect x="60" y="94" width="4" height="2" fill="#d4d4d4"/><rect x="65" y="94" width="8" height="2" fill="#d4d4d4"/><rect x="73" y="94" width="2" height="2" fill="#808080"/><rect x="75" y="94" width="4" height="2" fill="#569cd6"/><rect x="79" y="94" width="1" height="2" fill="#808080"/><rect x="32" y="96" width="2" height="2" fill="#808080"/><rect x="34" y="96" width="1" height="2" fill="#569cd6"/><rect x="35" y="96" width="1" height="2" fill="#808080"/><rect x="28" y="98" width="2" height="2" fill="#808080"/><rect x="30" y="98" width="2" height="2" fill="#569cd6"/><rect x="32" y="98" width="1" height="2" fill="#808080"/><rect x="28" y="100" width="1" height="2" fill="#808080"/><rect x="29" y="100" width="2" height="2" fill="#569cd6"/><rect x="32" y="100" width="5" height="2" fill="#9cdcfe"/><rect x="37" y="100" width="1" height="2" fill="#d4d4d4"/><rect x="38" y="100" width="13" height="2" fill="#ce9178"/><rect x="52" y="100" width="2" height="2" fill="#dcdcaa"/><rect x="55" y="100" width="7" height="2" fill="#4ec9b0"/><rect x="62" y="100" width="2" height="2" fill="#d4d4d4"/><rect x="64" y="100" width="2" height="2" fill="#dcdcaa"/><rect x="66" y="100" width="1" height="2" fill="#ce9178"/><rect x="67" y="100" width="7" height="2" fill="#ce9178"/><rect x="74" y="100" width="1" height="2" fill="#ce9178"/><rect x="76" y="100" width="1" height="2" fill="#ce9178"/><rect x="78" y="100" width="10" height="2" fill="#ce9178"/><rect x="89" y="100" width="1" height="2" fill="#ce9178"/><rect x="91" y="100" width="2" height="2" fill="#ce9178"/><rect x="94" y="100" width="2" height="2" fill="#dcdcaa"/><rect x="96" y="100" width="1" height="2" fill="#ce9178"/><rect x="97" y="100" width="1" height="2" fill="#808080"/><rect x="32" y="102" width="1" height="2" fill="#808080"/><rect x="33" y="102" width="1" height="2" fill="#569cd6"/><rect x="35" y="102" width="5" height="2" fill="#9cdcfe"/><rect x="40" y="102" width="1" height="2" fill="#d4d4d4"/><rect x="41" y="102" width="13" height="2" fill="#ce9178"/><rect x="55" y="102" width="2" height="2" fill="#dcdcaa"/><rect x="58" y="102" width="7" height="2" fill="#4ec9b0"/><rect x="65" y="102" width="2" height="2" fill="#d4d4d4"/><rect x="67" y="102" width="2" height="2" fill="#dcdcaa"/><rect x="69" y="102" width="1" height="2" fill="#ce9178"/><rect x="70" y="102" width="7" height="2" fill="#ce9178"/><rect x="77" y="102" width="1" height="2" fill="#ce9178"/><rect x="79" y="102" width="1" height="2" fill="#ce9178"/><rect x="81" y="102" width="8" height="2" fill="#ce9178"/><rect x="90" y="102" width="1" height="2" fill="#ce9178"/><rect x="92" y="102" width="2" height="2" fill="#ce9178"/><rect x="95" y="102" width="2" height="2" fill="#dcdcaa"/><rect x="97" y="102" width="1" height="2" fill="#ce9178"/><rect x="36" y="104" width="4" height="2" fill="#9cdcfe"/><rect x="40" y="104" width="1" height="2" fill="#d4d4d4"/><rect x="41" y="104" width="1" height="2" fill="#ce9178"/><rect x="42" y="104" width="2" height="2" fill="#dcdcaa"/><rect x="45" y="104" width="5" height="2" fill="#dcdcaa"/><rect x="50" y="104" width="1" height="2" fill="#ce9178"/><rect x="51" y="104" width="16" height="2" fill="#ce9178"/><rect x="67" y="104" width="1" height="2" fill="#ce9178"/><rect x="69" y="104" width="2" height="2" fill="#dcdcaa"/><rect x="71" y="104" width="1" height="2" fill="#ce9178"/><rect x="73" y="104" width="13" height="2" fill="#9cdcfe"/><rect x="86" y="104" width="1" height="2" fill="#d4d4d4"/><rect x="87" y="104" width="7" height="2" fill="#ce9178"/><rect x="94" y="104" width="1" height="2" fill="#808080"/><rect x="36" y="106" width="1" height="2" fill="#808080"/><rect x="37" y="106" width="4" height="2" fill="#569cd6"/><rect x="41" y="106" width="1" height="2" fill="#808080"/><rect x="40" y="108" width="1" height="2" fill="#808080"/><rect x="41" y="108" width="1" height="2" fill="#569cd6"/><rect x="43" y="108" width="5" height="2" fill="#9cdcfe"/><rect x="48" y="108" width="1" height="2" fill="#d4d4d4"/><rect x="49" y="108" width="3" height="2" fill="#ce9178"/><rect x="53" y="108" width="12" height="2" fill="#ce9178"/><rect x="65" y="108" width="1" height="2" fill="#808080"/><rect x="66" y="108" width="2" height="2" fill="#808080"/><rect x="68" y="108" width="1" height="2" fill="#569cd6"/><rect x="69" y="108" width="1" height="2" fill="#808080"/><rect x="36" y="110" width="2" height="2" fill="#808080"/><rect x="38" y="110" width="4" height="2" fill="#569cd6"/><rect x="42" y="110" width="1" height="2" fill="#808080"/><rect x="36" y="112" width="1" height="2" fill="#808080"/><rect x="37" y="112" width="4" height="2" fill="#569cd6"/><rect x="42" y="112" width="5" height="2" fill="#9cdcfe"/><rect x="47" y="112" width="1" height="2" fill="#d4d4d4"/><rect x="48" y="112" width="11" height="2" fill="#ce9178"/><rect x="59" y="112" width="1" height="2" fill="#808080"/><rect x="60" y="112" width="4" height="2" fill="#d4d4d4"/><rect x="65" y="112" width="8" height="2" fill="#d4d4d4"/><rect x="73" y="112" width="2" height="2" fill="#808080"/><rect x="75" y="112" width="4" height="2" fill="#569cd6"/><rect x="79" y="112" width="1" height="2" fill="#808080"/><rect x="32" y="114" width="2" height="2" fill="#808080"/><rect x="34" y="114" width="1" height="2" fill="#569cd6"/><rect x="35" y="114" width="1" height="2" fill="#808080"/><rect x="28" y="116" width="2" height="2" fill="#808080"/><rect x="30" y="116" width="2" height="2" fill="#569cd6"/><rect x="32" y="116" width="1" height="2" fill="#808080"/><rect x="24" y="118" width="2" height="2" fill="#808080"/><rect x="26" y="118" width="2" height="2" fill="#569cd6"/><rect x="28" y="118" width="1" height="2" fill="#808080"/><rect x="20" y="120" width="2" height="2" fill="#808080"/><rect x="22" y="120" width="3" height="2" fill="#569cd6"/><rect x="25" y="120" width="1" height="2" fill="#808080"/><rect x="20" y="122" width="4" height="2" fill="#6a9955"/><rect x="25" y="122" width="3" height="2" fill="#6a9955"/><rect x="29" y="122" width="7" height="2" fill="#6a9955"/><rect x="37" y="122" width="10" height="2" fill="#6a9955"/><rect x="48" y="122" width="3" height="2" fill="#6a9955"/><rect x="16" y="124" width="2" height="2" fill="#808080"/><rect x="18" y="124" width="3" height="2" fill="#569cd6"/><rect x="21" y="124" width="1" height="2" fill="#808080"/><rect x="16" y="126" width="4" height="2" fill="#6a9955"/><rect x="21" y="126" width="3" height="2" fill="#6a9955"/><rect x="25" y="126" width="7" height="2" fill="#6a9955"/><rect x="33" y="126" width="9" height="2" fill="#6a9955"/><rect x="12" y="128" width="2" height="2" fill="#808080"/><rect x="14" y="128" width="5" height="2" fill="#569cd6"/><rect x="19" y="128" width="1" height="2" fill="#808080"/></g><rect x="55" y="100" width="20" height="2" fill="#2b66a8"/><rect x="58" y="102" width="20" height="2" fill="#2b66a8"/></svg></div>
<div class="abs" style="left:1095px;top:0;width:1px;height:652px;background:#161616"></div>
<div class="abs" style="left:1096px;top:0;width:13px;height:1px;background:#141414"></div>
<div class="abs" style="left:1096px;top:343px;width:13px;height:2px;background:#a8a8a8"></div>
<div class="abs" style="left:1096px;top:350px;width:13px;height:2px;background:#a8a8a8"></div>
<!--SPARKLE--><svg style="left:73px;top:364px" width="18" height="18" viewBox="0 0 18 18"><path d="M7 1.5999999999999996Q8.19 5.81 12.4 7Q8.19 8.19 7 12.4Q5.81 8.19 1.5999999999999996 7Q5.81 5.81 7 1.5999999999999996ZM13.1 9.8Q13.80 12.30 16.3 13Q13.80 13.70 13.1 16.2Q12.40 13.70 9.899999999999999 13Q12.40 12.30 13.1 9.8Z" fill="#ffcc00" stroke="#1a1400" stroke-width=".6" stroke-linejoin="round" paint-order="stroke"/></svg>
  </div>
</div>
<div id="blackstrip"></div>
<div id="status">
<div class="abs" style="left:0;top:0;width:34px;height:21px;background:#0078d4"></div>
<svg style="left:12px;top:4px" width="11" height="13" viewBox="0 0 11 13" fill="none" stroke="#ffffff" stroke-width="1.300"><path d="M.900 5 4.900 8.600.900 12.200M9.700 .600 5.700 4.200l4 3.600"/></svg>
<svg style="left:42px;top:3px" width="14" height="14" viewBox="0 0 14 14" fill="none" stroke="#cccccc" stroke-width="1.100"><circle cx="7" cy="7" r="6"/><path d="M4.500 4.500l5 5M9.500 4.500l-5 5"/></svg>
<span class="tx" style="left:59.5px;top:0px;height:22px;line-height:22px;font-size:12px;letter-spacing:-0.487px">0</span>
<svg style="left:69px;top:3px" width="14" height="13" viewBox="0 0 14 13" fill="none" stroke="#cccccc" stroke-width="1.100" stroke-linejoin="round"><path d="M7 1 13.300 12H.7z"/><path d="M7 5v3.800M7 9.800v1.200" stroke-width="1.200"/></svg>
<span class="tx" style="left:86.5px;top:0px;height:22px;line-height:22px;font-size:12px;letter-spacing:-0.487px">0</span>
<svg style="left:111px;top:4px" width="10" height="14" viewBox="0 0 10 14" fill="none" stroke="#cccccc" stroke-width="1.100" stroke-linejoin="round"><path d="M4.800 .800h4L6.300 5h2.900L2.700 13l1.500-5.500H1.300z"/></svg>
<span class="tx" style="left:738px;top:0px;height:22px;line-height:22px;font-size:12px;letter-spacing:-0.182px">2 selections (40 characters selected)</span>
<span class="tx" style="left:942.8px;top:0px;height:22px;line-height:22px;font-size:12px;letter-spacing:-0.508px">Spaces: 4</span>
<span class="tx" style="left:1007.7px;top:0px;height:22px;line-height:22px;font-size:12px;letter-spacing:-0.48px">UTF-8</span>
<span class="tx" style="left:1055.4px;top:0px;height:22px;line-height:22px;font-size:12px;letter-spacing:-1.361px">CRLF</span>
<span class="tx" style="left:1098.8px;top:0px;height:22px;line-height:22px;font-size:12px;letter-spacing:1.842px;font-size:12px">{}</span>
<span class="tx" style="left:1117.8px;top:0px;height:22px;line-height:22px;font-size:12px;letter-spacing:-0.481px">Blade</span>
<svg style="left:1162px;top:4px" width="15" height="13" viewBox="0 0 15 13" fill="none" stroke="#cccccc" stroke-width="1.400" stroke-linejoin="round"><path d="M2.300 5.500C1.700 3.300 2.300 1.200 4.500 1c1.500-.100 2.600.400 3 1.500C7.900 1.400 9 .9 10.500 1c2.200.200 2.800 2.300 2.200 4.500"/><path d="M2.300 5.300C1.200 5.800.8 6.700.8 7.700c0 1.400 1 2.300 2.200 3 1.400.800 3 1.300 4.500 1.300s3.100-.500 4.500-1.300c1.200-.700 2.200-1.600 2.200-3 0-1-.400-1.900-1.500-2.400"/><path d="M5.900 7.300v2M9.100 7.300v2" stroke-width="1.500"/><path d="M4.600 3c.100 1-.100 1.700-.6 2.300M10.400 3c-.100 1 .100 1.700.6 2.300" stroke-width="2.200"/><path d="M3 5.700c1.500-.6 7.500-.6 9 0" stroke-width="1.200"/></svg>
<svg style="left:1194px;top:4px" width="11" height="14" viewBox="0 0 11 14" fill="none" stroke="#cccccc" stroke-width="1.100"><circle cx="5.500" cy="5.200" r="1.200" fill="#cccccc"/><path d="M5.500 6v7" stroke-width="1.600"/><path d="M3.300 7.800a3.100 3.100 0 1 1 4.400 0M2 9.600a5 5 0 1 1 7 0"/></svg>
<span class="tx" style="left:1210px;top:0px;height:22px;line-height:22px;font-size:12px;letter-spacing:-0.337px">Go Live</span>
<svg style="left:1265.500px;top:4px" width="13" height="13" viewBox="0 0 13 13" fill="none" stroke="#cccccc" stroke-width="1.100"><circle cx="6.500" cy="6.500" r="5.500"/><path d="M10.300 2.700 2.700 10.300"/></svg>
<span class="tx" style="left:1282.6px;top:0px;height:22px;line-height:22px;font-size:12px;letter-spacing:-0.086px">Prettier</span>
<svg style="left:1338px;top:4px" width="13" height="14" viewBox="0 0 13 14" fill="none" stroke="#cccccc" stroke-width="1.100" stroke-linejoin="round"><path d="M6.500 1.200c-2.300 0-3.500 1.700-3.500 3.800v3L1.500 10.300v.6h10v-.6L10 8V5c0-2.100-1.200-3.800-3.500-3.800z"/><path d="M5.200 11.300a1.300 1.300 0 0 0 2.600 0"/></svg>
</div>
</body>
</html>
